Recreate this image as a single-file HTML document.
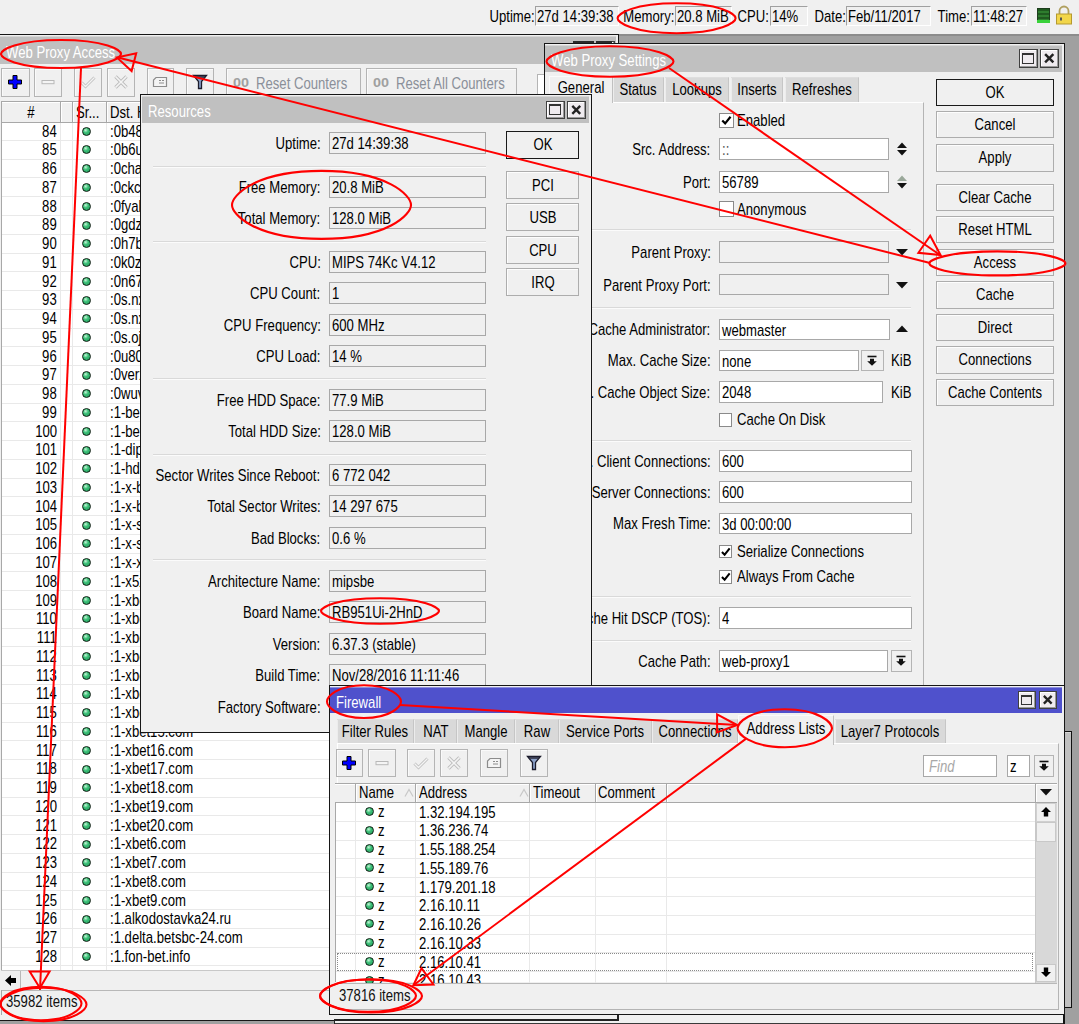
<!DOCTYPE html>
<html><head><meta charset="utf-8"><title>Winbox</title><style>*{margin:0;padding:0}
html,body{width:1079px;height:1024px;overflow:hidden;background:#a0a0a0;position:relative}
.b{position:absolute}
.t{position:absolute;white-space:pre;font-family:"Liberation Sans",sans-serif;font-size:15px;line-height:18px;color:#000}
</style></head><body>
<div class="b" style="left:0;top:0;width:1079px;height:34px;background:#f0f0f0;"></div>
<div class="b" style="left:0px;top:34px;width:1079px;height:2px;background:#8c8c8c;"></div>
<div class="t" style="right:544.5px;top:8px;font-size:15px;line-height:18px;color:#000;transform:scale(0.875,1.12);transform-origin:100% 14px;">Uptime:</div>
<div class="b" style="left:535px;top:6px;width:84px;height:20px;background:#f0f0f0;border-top:1px solid #a0a0a0;border-left:1px solid #a0a0a0;border-bottom:1px solid #fff;border-right:1px solid #fff;box-sizing:border-box;"></div>
<div class="t" style="left:537px;top:8px;font-size:15px;line-height:18px;color:#000;transform:scale(0.875,1.12);transform-origin:0 14px;">27d 14:39:38</div>
<div class="t" style="right:404.5px;top:8px;font-size:15px;line-height:18px;color:#000;transform:scale(0.875,1.12);transform-origin:100% 14px;">Memory:</div>
<div class="b" style="left:675px;top:6px;width:57px;height:20px;background:#f0f0f0;border-top:1px solid #a0a0a0;border-left:1px solid #a0a0a0;border-bottom:1px solid #fff;border-right:1px solid #fff;box-sizing:border-box;"></div>
<div class="t" style="left:677px;top:8px;font-size:15px;line-height:18px;color:#000;transform:scale(0.875,1.12);transform-origin:0 14px;">20.8 MiB</div>
<div class="t" style="right:310px;top:8px;font-size:15px;line-height:18px;color:#000;transform:scale(0.875,1.12);transform-origin:100% 14px;">CPU:</div>
<div class="b" style="left:770px;top:6px;width:38px;height:20px;background:#f0f0f0;border-top:1px solid #a0a0a0;border-left:1px solid #a0a0a0;border-bottom:1px solid #fff;border-right:1px solid #fff;box-sizing:border-box;"></div>
<div class="t" style="left:772px;top:8px;font-size:15px;line-height:18px;color:#000;transform:scale(0.875,1.12);transform-origin:0 14px;">14%</div>
<div class="t" style="right:233.5px;top:8px;font-size:15px;line-height:18px;color:#000;transform:scale(0.875,1.12);transform-origin:100% 14px;">Date:</div>
<div class="b" style="left:846px;top:6px;width:85px;height:20px;background:#f0f0f0;border-top:1px solid #a0a0a0;border-left:1px solid #a0a0a0;border-bottom:1px solid #fff;border-right:1px solid #fff;box-sizing:border-box;"></div>
<div class="t" style="left:848px;top:8px;font-size:15px;line-height:18px;color:#000;transform:scale(0.875,1.12);transform-origin:0 14px;">Feb/11/2017</div>
<div class="t" style="right:109px;top:8px;font-size:15px;line-height:18px;color:#000;transform:scale(0.875,1.12);transform-origin:100% 14px;">Time:</div>
<div class="b" style="left:971px;top:6px;width:56px;height:20px;background:#f0f0f0;border-top:1px solid #a0a0a0;border-left:1px solid #a0a0a0;border-bottom:1px solid #fff;border-right:1px solid #fff;box-sizing:border-box;"></div>
<div class="t" style="left:973px;top:8px;font-size:15px;line-height:18px;color:#000;transform:scale(0.875,1.12);transform-origin:0 14px;">11:48:27</div>
<div class="b" style="left:1037px;top:8px;width:13px;height:15px;background:repeating-linear-gradient(#1f5a1f 0 2px,#2e7d2e 2px 4px);border:1px solid #1d3d1d;box-sizing:border-box;"></div>
<div class="b" style="left:1037px;top:20px;width:13px;height:3px;background:#39d13a;"></div>
<svg class="b" style="left:1055px;top:5px" width="18" height="20" viewBox="0 0 18 20"><path d="M4.5 9 V6 a4.5 4.5 0 0 1 9 0 V9" fill="none" stroke="#b0a060" stroke-width="1.8"/><rect x="1.5" y="9" width="15" height="10" fill="#f2d64a" stroke="#b59a30" stroke-width="1"/><rect x="5" y="12.5" width="2" height="3" fill="#555"/></svg>
<div class="b" style="left:-4px;top:34px;width:622.5px;height:987px;background:#f0f0f0;border:1.6px solid #161616;box-sizing:border-box;"></div>
<div class="b" style="left:-2.4px;top:35.6px;width:618px;height:28.4px;background:#c0c0c0;box-shadow:inset 0 1px 0 rgba(255,255,255,0.35);"></div>
<div class="t" style="left:5.5px;top:44px;font-size:15px;line-height:18px;color:#fff;transform:scale(0.875,1.12);transform-origin:0 14px;">Web Proxy Access</div>
<div class="b" style="left:574px;top:41px;width:19px;height:19px;background:#efebef;border:1.5px solid #404040;box-sizing:border-box;box-shadow:inset -1px -1px 0 #9a9a9a, inset 1px 1px 0 #fff;"></div>
<div class="b" style="left:577.2px;top:44.5px;width:12.6px;height:12px;border:1.6px solid #333;border-top-width:2.6px;box-sizing:border-box;"></div>
<div class="b" style="left:596px;top:41px;width:19px;height:19px;background:#efebef;border:1.5px solid #404040;box-sizing:border-box;box-shadow:inset -1px -1px 0 #9a9a9a, inset 1px 1px 0 #fff;"></div>
<svg class="b" style="left:596px;top:41px" width="19" height="19" viewBox="0 0 18 18"><path d="M5 5 L13 13 M13 5 L5 13" stroke="#222" stroke-width="2.4"/></svg>
<div class="b" style="left:573px;top:40.6px;width:20.5px;height:3.4px;background:#2a2a2a;"></div>
<div class="b" style="left:595.5px;top:40.6px;width:16.5px;height:3.4px;background:#2a2a2a;"></div>
<div class="b" style="left:1px;top:68px;width:28.5px;height:28.5px;background:#f0f0f0;border:1px solid #b4b4b4;box-sizing:border-box;box-shadow:inset 1px 1px 0 #fafafa;"></div>
<svg class="b" style="left:6.25px;top:73.2px" width="18" height="18" viewBox="0 0 18 18"><path d="M7 2.5h4v4.5h4.5v4h-4.5v4.5h-4v-4.5h-4.5v-4h4.5z" fill="#0000ff" stroke="#000" stroke-width="1"/></svg>
<div class="b" style="left:34px;top:68px;width:27.5px;height:28.5px;background:#f0f0f0;border:1px solid #b4b4b4;box-sizing:border-box;box-shadow:inset 1px 1px 0 #fafafa;"></div>
<svg class="b" style="left:38.75px;top:73.2px" width="18" height="18" viewBox="0 0 18 18"><rect x="3" y="7.5" width="12" height="3.2" fill="#f4f4f4" stroke="#b8b8b8" stroke-width="1"/></svg>
<div class="b" style="left:74px;top:68px;width:27.5px;height:28.5px;background:#f0f0f0;border:1px solid #b4b4b4;box-sizing:border-box;box-shadow:inset 1px 1px 0 #fafafa;"></div>
<svg class="b" style="left:78.75px;top:73.2px" width="18" height="18" viewBox="0 0 18 18"><path d="M2.5 9.5 L6.5 13.5 L15.5 4.5" fill="none" stroke="#bdbdbd" stroke-width="3"/><path d="M2.5 9.5 L6.5 13.5 L15.5 4.5" fill="none" stroke="#f4f4f4" stroke-width="1.4"/></svg>
<div class="b" style="left:106.5px;top:68px;width:28px;height:28.5px;background:#f0f0f0;border:1px solid #b4b4b4;box-sizing:border-box;box-shadow:inset 1px 1px 0 #fafafa;"></div>
<svg class="b" style="left:111.5px;top:73.2px" width="18" height="18" viewBox="0 0 18 18"><path d="M3.5 3.5 L14.5 14.5 M14.5 3.5 L3.5 14.5" fill="none" stroke="#bdbdbd" stroke-width="3.4"/><path d="M3.5 3.5 L14.5 14.5 M14.5 3.5 L3.5 14.5" fill="none" stroke="#f4f4f4" stroke-width="1.6"/></svg>
<div class="b" style="left:146.7px;top:68px;width:27.1px;height:28.5px;background:#f0f0f0;border:1px solid #b4b4b4;box-sizing:border-box;box-shadow:inset 1px 1px 0 #fafafa;"></div>
<svg class="b" style="left:151.25px;top:73.2px" width="18" height="18" viewBox="0 0 18 18"><path d="M5 4.5 H15.5 V13.5 H2.5 V7 Z" fill="#f4f4f4" stroke="#8c8c8c" stroke-width="1.2"/><path d="M8 7.5h2M11 7.5h2M8 10h5" stroke="#8c8c8c" stroke-width="1"/></svg>
<div class="b" style="left:186.3px;top:68px;width:27.7px;height:28.5px;background:#f0f0f0;border:1px solid #b4b4b4;box-sizing:border-box;box-shadow:inset 1px 1px 0 #fafafa;"></div>
<svg class="b" style="left:191.15px;top:73.2px" width="18" height="18" viewBox="0 0 18 18"><path d="M2.5 2.5 H15.5 L10.5 8.5 V15.5 H7.5 V8.5 Z" fill="#8aa0c8" stroke="#1a1a2a" stroke-width="1.3"/><path d="M4 4 H14" stroke="#2a2a3a" stroke-width="1.5"/></svg>
<div class="b" style="left:226.3px;top:68px;width:134.3px;height:28.5px;background:#f0f0f0;border:1px solid #b4b4b4;box-sizing:border-box;box-shadow:inset 1px 1px 0 #fafafa;"></div>
<div class="t" style="left:233.3px;top:76.3px;font-size:12px;line-height:14.4px;color:#a0a0a0;transform:scale(1.2,1.12);transform-origin:0 11.2px;font-weight:bold;">00</div>
<div class="t" style="left:256.3px;top:75px;font-size:15px;line-height:18px;color:#8a8f99;transform:scale(0.875,1.12);transform-origin:0 14px;">Reset Counters</div>
<div class="b" style="left:365.8px;top:68px;width:150.9px;height:28.5px;background:#f0f0f0;border:1px solid #b4b4b4;box-sizing:border-box;box-shadow:inset 1px 1px 0 #fafafa;"></div>
<div class="t" style="left:372.8px;top:76.3px;font-size:12px;line-height:14.4px;color:#a0a0a0;transform:scale(1.2,1.12);transform-origin:0 11.2px;font-weight:bold;">00</div>
<div class="t" style="left:395.8px;top:75px;font-size:15px;line-height:18px;color:#8a8f99;transform:scale(0.875,1.12);transform-origin:0 14px;">Reset All Counters</div>
<div class="b" style="left:536.5px;top:74px;width:63.5px;height:22px;background:#fff;border:1px solid #b4b4b4;box-sizing:border-box;"></div>
<div class="b" style="left:1px;top:100.5px;width:617px;height:869.5px;background:#fff;"></div>
<div class="b" style="left:1px;top:100.5px;width:615.5px;height:22px;background:#f0f0f0;border-top:1px solid #a8a8a8;border-bottom:1px solid #a8a8a8;box-shadow:inset 0 1px 0 #fff;box-sizing:border-box;"></div>
<div class="b" style="left:1px;top:100.5px;width:1px;height:869.5px;background:#a8a8a8;"></div>
<div class="b" style="left:60.3px;top:100.5px;width:1px;height:21.5px;background:#a8a8a8;"></div>
<div class="b" style="left:61.3px;top:101.5px;width:1px;height:20.5px;background:#fff;"></div>
<div class="b" style="left:72px;top:100.5px;width:1px;height:21.5px;background:#a8a8a8;"></div>
<div class="b" style="left:73px;top:101.5px;width:1px;height:20.5px;background:#fff;"></div>
<div class="b" style="left:106.4px;top:100.5px;width:1px;height:21.5px;background:#a8a8a8;"></div>
<div class="b" style="left:107.4px;top:101.5px;width:1px;height:20.5px;background:#fff;"></div>
<div class="t" style="left:-269px;width:600px;text-align:center;top:104px;font-size:15px;line-height:18px;color:#000;transform:scale(0.875,1.12);transform-origin:50% 14px;">#</div>
<div class="t" style="left:76px;top:104px;font-size:15px;line-height:18px;color:#000;transform:scale(0.875,1.12);transform-origin:0 14px;">Sr...</div>
<div class="t" style="left:110.3px;top:104px;font-size:15px;line-height:18px;color:#000;transform:scale(0.875,1.12);transform-origin:0 14px;">Dst. Host</div>
<div class="b" style="left:2px;top:139.96px;width:614.5px;height:1px;background:#e9e9e9;"></div>
<div class="t" style="right:1022.3px;top:122.5px;font-size:15px;line-height:18px;color:#000;transform:scale(0.875,1.12);transform-origin:100% 14px;">84</div>
<div class="b" style="left:82.1px;top:126.7px;width:9px;height:9px;border-radius:50%;box-sizing:border-box;border:1.3px solid #0c1f12;background:radial-gradient(circle at 38% 32%,#c8f5d8 0,#3cc078 38%,#24985a 100%);"></div>
<div class="t" style="left:110px;top:122.5px;font-size:15px;line-height:18px;color:#000;transform:scale(0.875,1.12);transform-origin:0 14px;">:0b48x.com</div>
<div class="b" style="left:2px;top:158.72px;width:614.5px;height:1px;background:#e9e9e9;"></div>
<div class="t" style="right:1022.3px;top:141.26px;font-size:15px;line-height:18px;color:#000;transform:scale(0.875,1.12);transform-origin:100% 14px;">85</div>
<div class="b" style="left:82.1px;top:145.46px;width:9px;height:9px;border-radius:50%;box-sizing:border-box;border:1.3px solid #0c1f12;background:radial-gradient(circle at 38% 32%,#c8f5d8 0,#3cc078 38%,#24985a 100%);"></div>
<div class="t" style="left:110px;top:141.26px;font-size:15px;line-height:18px;color:#000;transform:scale(0.875,1.12);transform-origin:0 14px;">:0b6ux.com</div>
<div class="b" style="left:2px;top:177.48px;width:614.5px;height:1px;background:#e9e9e9;"></div>
<div class="t" style="right:1022.3px;top:160.02px;font-size:15px;line-height:18px;color:#000;transform:scale(0.875,1.12);transform-origin:100% 14px;">86</div>
<div class="b" style="left:82.1px;top:164.22px;width:9px;height:9px;border-radius:50%;box-sizing:border-box;border:1.3px solid #0c1f12;background:radial-gradient(circle at 38% 32%,#c8f5d8 0,#3cc078 38%,#24985a 100%);"></div>
<div class="t" style="left:110px;top:160.02px;font-size:15px;line-height:18px;color:#000;transform:scale(0.875,1.12);transform-origin:0 14px;">:0chax.com</div>
<div class="b" style="left:2px;top:196.24px;width:614.5px;height:1px;background:#e9e9e9;"></div>
<div class="t" style="right:1022.3px;top:178.78px;font-size:15px;line-height:18px;color:#000;transform:scale(0.875,1.12);transform-origin:100% 14px;">87</div>
<div class="b" style="left:82.1px;top:182.98px;width:9px;height:9px;border-radius:50%;box-sizing:border-box;border:1.3px solid #0c1f12;background:radial-gradient(circle at 38% 32%,#c8f5d8 0,#3cc078 38%,#24985a 100%);"></div>
<div class="t" style="left:110px;top:178.78px;font-size:15px;line-height:18px;color:#000;transform:scale(0.875,1.12);transform-origin:0 14px;">:0ckcx.com</div>
<div class="b" style="left:2px;top:215px;width:614.5px;height:1px;background:#e9e9e9;"></div>
<div class="t" style="right:1022.3px;top:197.54px;font-size:15px;line-height:18px;color:#000;transform:scale(0.875,1.12);transform-origin:100% 14px;">88</div>
<div class="b" style="left:82.1px;top:201.74px;width:9px;height:9px;border-radius:50%;box-sizing:border-box;border:1.3px solid #0c1f12;background:radial-gradient(circle at 38% 32%,#c8f5d8 0,#3cc078 38%,#24985a 100%);"></div>
<div class="t" style="left:110px;top:197.54px;font-size:15px;line-height:18px;color:#000;transform:scale(0.875,1.12);transform-origin:0 14px;">:0fyalx.com</div>
<div class="b" style="left:2px;top:233.76px;width:614.5px;height:1px;background:#e9e9e9;"></div>
<div class="t" style="right:1022.3px;top:216.3px;font-size:15px;line-height:18px;color:#000;transform:scale(0.875,1.12);transform-origin:100% 14px;">89</div>
<div class="b" style="left:82.1px;top:220.5px;width:9px;height:9px;border-radius:50%;box-sizing:border-box;border:1.3px solid #0c1f12;background:radial-gradient(circle at 38% 32%,#c8f5d8 0,#3cc078 38%,#24985a 100%);"></div>
<div class="t" style="left:110px;top:216.3px;font-size:15px;line-height:18px;color:#000;transform:scale(0.875,1.12);transform-origin:0 14px;">:0gdzx.com</div>
<div class="b" style="left:2px;top:252.52px;width:614.5px;height:1px;background:#e9e9e9;"></div>
<div class="t" style="right:1022.3px;top:235.06px;font-size:15px;line-height:18px;color:#000;transform:scale(0.875,1.12);transform-origin:100% 14px;">90</div>
<div class="b" style="left:82.1px;top:239.26px;width:9px;height:9px;border-radius:50%;box-sizing:border-box;border:1.3px solid #0c1f12;background:radial-gradient(circle at 38% 32%,#c8f5d8 0,#3cc078 38%,#24985a 100%);"></div>
<div class="t" style="left:110px;top:235.06px;font-size:15px;line-height:18px;color:#000;transform:scale(0.875,1.12);transform-origin:0 14px;">:0h7bx.com</div>
<div class="b" style="left:2px;top:271.28px;width:614.5px;height:1px;background:#e9e9e9;"></div>
<div class="t" style="right:1022.3px;top:253.82px;font-size:15px;line-height:18px;color:#000;transform:scale(0.875,1.12);transform-origin:100% 14px;">91</div>
<div class="b" style="left:82.1px;top:258.02px;width:9px;height:9px;border-radius:50%;box-sizing:border-box;border:1.3px solid #0c1f12;background:radial-gradient(circle at 38% 32%,#c8f5d8 0,#3cc078 38%,#24985a 100%);"></div>
<div class="t" style="left:110px;top:253.82px;font-size:15px;line-height:18px;color:#000;transform:scale(0.875,1.12);transform-origin:0 14px;">:0k0zx.com</div>
<div class="b" style="left:2px;top:290.04px;width:614.5px;height:1px;background:#e9e9e9;"></div>
<div class="t" style="right:1022.3px;top:272.58px;font-size:15px;line-height:18px;color:#000;transform:scale(0.875,1.12);transform-origin:100% 14px;">92</div>
<div class="b" style="left:82.1px;top:276.78px;width:9px;height:9px;border-radius:50%;box-sizing:border-box;border:1.3px solid #0c1f12;background:radial-gradient(circle at 38% 32%,#c8f5d8 0,#3cc078 38%,#24985a 100%);"></div>
<div class="t" style="left:110px;top:272.58px;font-size:15px;line-height:18px;color:#000;transform:scale(0.875,1.12);transform-origin:0 14px;">:0n67x.com</div>
<div class="b" style="left:2px;top:308.8px;width:614.5px;height:1px;background:#e9e9e9;"></div>
<div class="t" style="right:1022.3px;top:291.34px;font-size:15px;line-height:18px;color:#000;transform:scale(0.875,1.12);transform-origin:100% 14px;">93</div>
<div class="b" style="left:82.1px;top:295.54px;width:9px;height:9px;border-radius:50%;box-sizing:border-box;border:1.3px solid #0c1f12;background:radial-gradient(circle at 38% 32%,#c8f5d8 0,#3cc078 38%,#24985a 100%);"></div>
<div class="t" style="left:110px;top:291.34px;font-size:15px;line-height:18px;color:#000;transform:scale(0.875,1.12);transform-origin:0 14px;">:0s.nx.com</div>
<div class="b" style="left:2px;top:327.56px;width:614.5px;height:1px;background:#e9e9e9;"></div>
<div class="t" style="right:1022.3px;top:310.1px;font-size:15px;line-height:18px;color:#000;transform:scale(0.875,1.12);transform-origin:100% 14px;">94</div>
<div class="b" style="left:82.1px;top:314.3px;width:9px;height:9px;border-radius:50%;box-sizing:border-box;border:1.3px solid #0c1f12;background:radial-gradient(circle at 38% 32%,#c8f5d8 0,#3cc078 38%,#24985a 100%);"></div>
<div class="t" style="left:110px;top:310.1px;font-size:15px;line-height:18px;color:#000;transform:scale(0.875,1.12);transform-origin:0 14px;">:0s.nx.com</div>
<div class="b" style="left:2px;top:346.32px;width:614.5px;height:1px;background:#e9e9e9;"></div>
<div class="t" style="right:1022.3px;top:328.86px;font-size:15px;line-height:18px;color:#000;transform:scale(0.875,1.12);transform-origin:100% 14px;">95</div>
<div class="b" style="left:82.1px;top:333.06px;width:9px;height:9px;border-radius:50%;box-sizing:border-box;border:1.3px solid #0c1f12;background:radial-gradient(circle at 38% 32%,#c8f5d8 0,#3cc078 38%,#24985a 100%);"></div>
<div class="t" style="left:110px;top:328.86px;font-size:15px;line-height:18px;color:#000;transform:scale(0.875,1.12);transform-origin:0 14px;">:0s.ojx.com</div>
<div class="b" style="left:2px;top:365.08px;width:614.5px;height:1px;background:#e9e9e9;"></div>
<div class="t" style="right:1022.3px;top:347.62px;font-size:15px;line-height:18px;color:#000;transform:scale(0.875,1.12);transform-origin:100% 14px;">96</div>
<div class="b" style="left:82.1px;top:351.82px;width:9px;height:9px;border-radius:50%;box-sizing:border-box;border:1.3px solid #0c1f12;background:radial-gradient(circle at 38% 32%,#c8f5d8 0,#3cc078 38%,#24985a 100%);"></div>
<div class="t" style="left:110px;top:347.62px;font-size:15px;line-height:18px;color:#000;transform:scale(0.875,1.12);transform-origin:0 14px;">:0u80x.com</div>
<div class="b" style="left:2px;top:383.84px;width:614.5px;height:1px;background:#e9e9e9;"></div>
<div class="t" style="right:1022.3px;top:366.38px;font-size:15px;line-height:18px;color:#000;transform:scale(0.875,1.12);transform-origin:100% 14px;">97</div>
<div class="b" style="left:82.1px;top:370.58px;width:9px;height:9px;border-radius:50%;box-sizing:border-box;border:1.3px solid #0c1f12;background:radial-gradient(circle at 38% 32%,#c8f5d8 0,#3cc078 38%,#24985a 100%);"></div>
<div class="t" style="left:110px;top:366.38px;font-size:15px;line-height:18px;color:#000;transform:scale(0.875,1.12);transform-origin:0 14px;">:0verx.com</div>
<div class="b" style="left:2px;top:402.6px;width:614.5px;height:1px;background:#e9e9e9;"></div>
<div class="t" style="right:1022.3px;top:385.14px;font-size:15px;line-height:18px;color:#000;transform:scale(0.875,1.12);transform-origin:100% 14px;">98</div>
<div class="b" style="left:82.1px;top:389.34px;width:9px;height:9px;border-radius:50%;box-sizing:border-box;border:1.3px solid #0c1f12;background:radial-gradient(circle at 38% 32%,#c8f5d8 0,#3cc078 38%,#24985a 100%);"></div>
<div class="t" style="left:110px;top:385.14px;font-size:15px;line-height:18px;color:#000;transform:scale(0.875,1.12);transform-origin:0 14px;">:0wuvx.com</div>
<div class="b" style="left:2px;top:421.36px;width:614.5px;height:1px;background:#e9e9e9;"></div>
<div class="t" style="right:1022.3px;top:403.9px;font-size:15px;line-height:18px;color:#000;transform:scale(0.875,1.12);transform-origin:100% 14px;">99</div>
<div class="b" style="left:82.1px;top:408.1px;width:9px;height:9px;border-radius:50%;box-sizing:border-box;border:1.3px solid #0c1f12;background:radial-gradient(circle at 38% 32%,#c8f5d8 0,#3cc078 38%,#24985a 100%);"></div>
<div class="t" style="left:110px;top:403.9px;font-size:15px;line-height:18px;color:#000;transform:scale(0.875,1.12);transform-origin:0 14px;">:1-bet.com</div>
<div class="b" style="left:2px;top:440.12px;width:614.5px;height:1px;background:#e9e9e9;"></div>
<div class="t" style="right:1022.3px;top:422.66px;font-size:15px;line-height:18px;color:#000;transform:scale(0.875,1.12);transform-origin:100% 14px;">100</div>
<div class="b" style="left:82.1px;top:426.86px;width:9px;height:9px;border-radius:50%;box-sizing:border-box;border:1.3px solid #0c1f12;background:radial-gradient(circle at 38% 32%,#c8f5d8 0,#3cc078 38%,#24985a 100%);"></div>
<div class="t" style="left:110px;top:422.66px;font-size:15px;line-height:18px;color:#000;transform:scale(0.875,1.12);transform-origin:0 14px;">:1-bet.com</div>
<div class="b" style="left:2px;top:458.88px;width:614.5px;height:1px;background:#e9e9e9;"></div>
<div class="t" style="right:1022.3px;top:441.42px;font-size:15px;line-height:18px;color:#000;transform:scale(0.875,1.12);transform-origin:100% 14px;">101</div>
<div class="b" style="left:82.1px;top:445.62px;width:9px;height:9px;border-radius:50%;box-sizing:border-box;border:1.3px solid #0c1f12;background:radial-gradient(circle at 38% 32%,#c8f5d8 0,#3cc078 38%,#24985a 100%);"></div>
<div class="t" style="left:110px;top:441.42px;font-size:15px;line-height:18px;color:#000;transform:scale(0.875,1.12);transform-origin:0 14px;">:1-dipx.com</div>
<div class="b" style="left:2px;top:477.64px;width:614.5px;height:1px;background:#e9e9e9;"></div>
<div class="t" style="right:1022.3px;top:460.18px;font-size:15px;line-height:18px;color:#000;transform:scale(0.875,1.12);transform-origin:100% 14px;">102</div>
<div class="b" style="left:82.1px;top:464.38px;width:9px;height:9px;border-radius:50%;box-sizing:border-box;border:1.3px solid #0c1f12;background:radial-gradient(circle at 38% 32%,#c8f5d8 0,#3cc078 38%,#24985a 100%);"></div>
<div class="t" style="left:110px;top:460.18px;font-size:15px;line-height:18px;color:#000;transform:scale(0.875,1.12);transform-origin:0 14px;">:1-hdx.com</div>
<div class="b" style="left:2px;top:496.4px;width:614.5px;height:1px;background:#e9e9e9;"></div>
<div class="t" style="right:1022.3px;top:478.94px;font-size:15px;line-height:18px;color:#000;transform:scale(0.875,1.12);transform-origin:100% 14px;">103</div>
<div class="b" style="left:82.1px;top:483.14px;width:9px;height:9px;border-radius:50%;box-sizing:border-box;border:1.3px solid #0c1f12;background:radial-gradient(circle at 38% 32%,#c8f5d8 0,#3cc078 38%,#24985a 100%);"></div>
<div class="t" style="left:110px;top:478.94px;font-size:15px;line-height:18px;color:#000;transform:scale(0.875,1.12);transform-origin:0 14px;">:1-x-bet.com</div>
<div class="b" style="left:2px;top:515.16px;width:614.5px;height:1px;background:#e9e9e9;"></div>
<div class="t" style="right:1022.3px;top:497.7px;font-size:15px;line-height:18px;color:#000;transform:scale(0.875,1.12);transform-origin:100% 14px;">104</div>
<div class="b" style="left:82.1px;top:501.9px;width:9px;height:9px;border-radius:50%;box-sizing:border-box;border:1.3px solid #0c1f12;background:radial-gradient(circle at 38% 32%,#c8f5d8 0,#3cc078 38%,#24985a 100%);"></div>
<div class="t" style="left:110px;top:497.7px;font-size:15px;line-height:18px;color:#000;transform:scale(0.875,1.12);transform-origin:0 14px;">:1-x-bet.com</div>
<div class="b" style="left:2px;top:533.92px;width:614.5px;height:1px;background:#e9e9e9;"></div>
<div class="t" style="right:1022.3px;top:516.46px;font-size:15px;line-height:18px;color:#000;transform:scale(0.875,1.12);transform-origin:100% 14px;">105</div>
<div class="b" style="left:82.1px;top:520.66px;width:9px;height:9px;border-radius:50%;box-sizing:border-box;border:1.3px solid #0c1f12;background:radial-gradient(circle at 38% 32%,#c8f5d8 0,#3cc078 38%,#24985a 100%);"></div>
<div class="t" style="left:110px;top:516.46px;font-size:15px;line-height:18px;color:#000;transform:scale(0.875,1.12);transform-origin:0 14px;">:1-x-s.com</div>
<div class="b" style="left:2px;top:552.68px;width:614.5px;height:1px;background:#e9e9e9;"></div>
<div class="t" style="right:1022.3px;top:535.22px;font-size:15px;line-height:18px;color:#000;transform:scale(0.875,1.12);transform-origin:100% 14px;">106</div>
<div class="b" style="left:82.1px;top:539.42px;width:9px;height:9px;border-radius:50%;box-sizing:border-box;border:1.3px solid #0c1f12;background:radial-gradient(circle at 38% 32%,#c8f5d8 0,#3cc078 38%,#24985a 100%);"></div>
<div class="t" style="left:110px;top:535.22px;font-size:15px;line-height:18px;color:#000;transform:scale(0.875,1.12);transform-origin:0 14px;">:1-x-s.com</div>
<div class="b" style="left:2px;top:571.44px;width:614.5px;height:1px;background:#e9e9e9;"></div>
<div class="t" style="right:1022.3px;top:553.98px;font-size:15px;line-height:18px;color:#000;transform:scale(0.875,1.12);transform-origin:100% 14px;">107</div>
<div class="b" style="left:82.1px;top:558.18px;width:9px;height:9px;border-radius:50%;box-sizing:border-box;border:1.3px solid #0c1f12;background:radial-gradient(circle at 38% 32%,#c8f5d8 0,#3cc078 38%,#24985a 100%);"></div>
<div class="t" style="left:110px;top:553.98px;font-size:15px;line-height:18px;color:#000;transform:scale(0.875,1.12);transform-origin:0 14px;">:1-x-x.com</div>
<div class="b" style="left:2px;top:590.2px;width:614.5px;height:1px;background:#e9e9e9;"></div>
<div class="t" style="right:1022.3px;top:572.74px;font-size:15px;line-height:18px;color:#000;transform:scale(0.875,1.12);transform-origin:100% 14px;">108</div>
<div class="b" style="left:82.1px;top:576.94px;width:9px;height:9px;border-radius:50%;box-sizing:border-box;border:1.3px solid #0c1f12;background:radial-gradient(circle at 38% 32%,#c8f5d8 0,#3cc078 38%,#24985a 100%);"></div>
<div class="t" style="left:110px;top:572.74px;font-size:15px;line-height:18px;color:#000;transform:scale(0.875,1.12);transform-origin:0 14px;">:1-x5x.com</div>
<div class="b" style="left:2px;top:608.96px;width:614.5px;height:1px;background:#e9e9e9;"></div>
<div class="t" style="right:1022.3px;top:591.5px;font-size:15px;line-height:18px;color:#000;transform:scale(0.875,1.12);transform-origin:100% 14px;">109</div>
<div class="b" style="left:82.1px;top:595.7px;width:9px;height:9px;border-radius:50%;box-sizing:border-box;border:1.3px solid #0c1f12;background:radial-gradient(circle at 38% 32%,#c8f5d8 0,#3cc078 38%,#24985a 100%);"></div>
<div class="t" style="left:110px;top:591.5px;font-size:15px;line-height:18px;color:#000;transform:scale(0.875,1.12);transform-origin:0 14px;">:1-xbet.com</div>
<div class="b" style="left:2px;top:627.72px;width:614.5px;height:1px;background:#e9e9e9;"></div>
<div class="t" style="right:1022.3px;top:610.26px;font-size:15px;line-height:18px;color:#000;transform:scale(0.875,1.12);transform-origin:100% 14px;">110</div>
<div class="b" style="left:82.1px;top:614.46px;width:9px;height:9px;border-radius:50%;box-sizing:border-box;border:1.3px solid #0c1f12;background:radial-gradient(circle at 38% 32%,#c8f5d8 0,#3cc078 38%,#24985a 100%);"></div>
<div class="t" style="left:110px;top:610.26px;font-size:15px;line-height:18px;color:#000;transform:scale(0.875,1.12);transform-origin:0 14px;">:1-xbet1.com</div>
<div class="b" style="left:2px;top:646.48px;width:614.5px;height:1px;background:#e9e9e9;"></div>
<div class="t" style="right:1022.3px;top:629.02px;font-size:15px;line-height:18px;color:#000;transform:scale(0.875,1.12);transform-origin:100% 14px;">111</div>
<div class="b" style="left:82.1px;top:633.22px;width:9px;height:9px;border-radius:50%;box-sizing:border-box;border:1.3px solid #0c1f12;background:radial-gradient(circle at 38% 32%,#c8f5d8 0,#3cc078 38%,#24985a 100%);"></div>
<div class="t" style="left:110px;top:629.02px;font-size:15px;line-height:18px;color:#000;transform:scale(0.875,1.12);transform-origin:0 14px;">:1-xbet10.com</div>
<div class="b" style="left:2px;top:665.24px;width:614.5px;height:1px;background:#e9e9e9;"></div>
<div class="t" style="right:1022.3px;top:647.78px;font-size:15px;line-height:18px;color:#000;transform:scale(0.875,1.12);transform-origin:100% 14px;">112</div>
<div class="b" style="left:82.1px;top:651.98px;width:9px;height:9px;border-radius:50%;box-sizing:border-box;border:1.3px solid #0c1f12;background:radial-gradient(circle at 38% 32%,#c8f5d8 0,#3cc078 38%,#24985a 100%);"></div>
<div class="t" style="left:110px;top:647.78px;font-size:15px;line-height:18px;color:#000;transform:scale(0.875,1.12);transform-origin:0 14px;">:1-xbet11.com</div>
<div class="b" style="left:2px;top:684px;width:614.5px;height:1px;background:#e9e9e9;"></div>
<div class="t" style="right:1022.3px;top:666.54px;font-size:15px;line-height:18px;color:#000;transform:scale(0.875,1.12);transform-origin:100% 14px;">113</div>
<div class="b" style="left:82.1px;top:670.74px;width:9px;height:9px;border-radius:50%;box-sizing:border-box;border:1.3px solid #0c1f12;background:radial-gradient(circle at 38% 32%,#c8f5d8 0,#3cc078 38%,#24985a 100%);"></div>
<div class="t" style="left:110px;top:666.54px;font-size:15px;line-height:18px;color:#000;transform:scale(0.875,1.12);transform-origin:0 14px;">:1-xbet12.com</div>
<div class="b" style="left:2px;top:702.76px;width:614.5px;height:1px;background:#e9e9e9;"></div>
<div class="t" style="right:1022.3px;top:685.3px;font-size:15px;line-height:18px;color:#000;transform:scale(0.875,1.12);transform-origin:100% 14px;">114</div>
<div class="b" style="left:82.1px;top:689.5px;width:9px;height:9px;border-radius:50%;box-sizing:border-box;border:1.3px solid #0c1f12;background:radial-gradient(circle at 38% 32%,#c8f5d8 0,#3cc078 38%,#24985a 100%);"></div>
<div class="t" style="left:110px;top:685.3px;font-size:15px;line-height:18px;color:#000;transform:scale(0.875,1.12);transform-origin:0 14px;">:1-xbet13.com</div>
<div class="b" style="left:2px;top:721.52px;width:614.5px;height:1px;background:#e9e9e9;"></div>
<div class="t" style="right:1022.3px;top:704.06px;font-size:15px;line-height:18px;color:#000;transform:scale(0.875,1.12);transform-origin:100% 14px;">115</div>
<div class="b" style="left:82.1px;top:708.26px;width:9px;height:9px;border-radius:50%;box-sizing:border-box;border:1.3px solid #0c1f12;background:radial-gradient(circle at 38% 32%,#c8f5d8 0,#3cc078 38%,#24985a 100%);"></div>
<div class="t" style="left:110px;top:704.06px;font-size:15px;line-height:18px;color:#000;transform:scale(0.875,1.12);transform-origin:0 14px;">:1-xbet14.com</div>
<div class="b" style="left:2px;top:740.28px;width:614.5px;height:1px;background:#e9e9e9;"></div>
<div class="t" style="right:1022.3px;top:722.82px;font-size:15px;line-height:18px;color:#000;transform:scale(0.875,1.12);transform-origin:100% 14px;">116</div>
<div class="b" style="left:82.1px;top:727.02px;width:9px;height:9px;border-radius:50%;box-sizing:border-box;border:1.3px solid #0c1f12;background:radial-gradient(circle at 38% 32%,#c8f5d8 0,#3cc078 38%,#24985a 100%);"></div>
<div class="t" style="left:110px;top:722.82px;font-size:15px;line-height:18px;color:#000;transform:scale(0.875,1.12);transform-origin:0 14px;">:1-xbet15.com</div>
<div class="b" style="left:2px;top:759.04px;width:614.5px;height:1px;background:#e9e9e9;"></div>
<div class="t" style="right:1022.3px;top:741.58px;font-size:15px;line-height:18px;color:#000;transform:scale(0.875,1.12);transform-origin:100% 14px;">117</div>
<div class="b" style="left:82.1px;top:745.78px;width:9px;height:9px;border-radius:50%;box-sizing:border-box;border:1.3px solid #0c1f12;background:radial-gradient(circle at 38% 32%,#c8f5d8 0,#3cc078 38%,#24985a 100%);"></div>
<div class="t" style="left:110px;top:741.58px;font-size:15px;line-height:18px;color:#000;transform:scale(0.875,1.12);transform-origin:0 14px;">:1-xbet16.com</div>
<div class="b" style="left:2px;top:777.8px;width:614.5px;height:1px;background:#e9e9e9;"></div>
<div class="t" style="right:1022.3px;top:760.34px;font-size:15px;line-height:18px;color:#000;transform:scale(0.875,1.12);transform-origin:100% 14px;">118</div>
<div class="b" style="left:82.1px;top:764.54px;width:9px;height:9px;border-radius:50%;box-sizing:border-box;border:1.3px solid #0c1f12;background:radial-gradient(circle at 38% 32%,#c8f5d8 0,#3cc078 38%,#24985a 100%);"></div>
<div class="t" style="left:110px;top:760.34px;font-size:15px;line-height:18px;color:#000;transform:scale(0.875,1.12);transform-origin:0 14px;">:1-xbet17.com</div>
<div class="b" style="left:2px;top:796.56px;width:614.5px;height:1px;background:#e9e9e9;"></div>
<div class="t" style="right:1022.3px;top:779.1px;font-size:15px;line-height:18px;color:#000;transform:scale(0.875,1.12);transform-origin:100% 14px;">119</div>
<div class="b" style="left:82.1px;top:783.3px;width:9px;height:9px;border-radius:50%;box-sizing:border-box;border:1.3px solid #0c1f12;background:radial-gradient(circle at 38% 32%,#c8f5d8 0,#3cc078 38%,#24985a 100%);"></div>
<div class="t" style="left:110px;top:779.1px;font-size:15px;line-height:18px;color:#000;transform:scale(0.875,1.12);transform-origin:0 14px;">:1-xbet18.com</div>
<div class="b" style="left:2px;top:815.32px;width:614.5px;height:1px;background:#e9e9e9;"></div>
<div class="t" style="right:1022.3px;top:797.86px;font-size:15px;line-height:18px;color:#000;transform:scale(0.875,1.12);transform-origin:100% 14px;">120</div>
<div class="b" style="left:82.1px;top:802.06px;width:9px;height:9px;border-radius:50%;box-sizing:border-box;border:1.3px solid #0c1f12;background:radial-gradient(circle at 38% 32%,#c8f5d8 0,#3cc078 38%,#24985a 100%);"></div>
<div class="t" style="left:110px;top:797.86px;font-size:15px;line-height:18px;color:#000;transform:scale(0.875,1.12);transform-origin:0 14px;">:1-xbet19.com</div>
<div class="b" style="left:2px;top:834.08px;width:614.5px;height:1px;background:#e9e9e9;"></div>
<div class="t" style="right:1022.3px;top:816.62px;font-size:15px;line-height:18px;color:#000;transform:scale(0.875,1.12);transform-origin:100% 14px;">121</div>
<div class="b" style="left:82.1px;top:820.82px;width:9px;height:9px;border-radius:50%;box-sizing:border-box;border:1.3px solid #0c1f12;background:radial-gradient(circle at 38% 32%,#c8f5d8 0,#3cc078 38%,#24985a 100%);"></div>
<div class="t" style="left:110px;top:816.62px;font-size:15px;line-height:18px;color:#000;transform:scale(0.875,1.12);transform-origin:0 14px;">:1-xbet20.com</div>
<div class="b" style="left:2px;top:852.84px;width:614.5px;height:1px;background:#e9e9e9;"></div>
<div class="t" style="right:1022.3px;top:835.38px;font-size:15px;line-height:18px;color:#000;transform:scale(0.875,1.12);transform-origin:100% 14px;">122</div>
<div class="b" style="left:82.1px;top:839.58px;width:9px;height:9px;border-radius:50%;box-sizing:border-box;border:1.3px solid #0c1f12;background:radial-gradient(circle at 38% 32%,#c8f5d8 0,#3cc078 38%,#24985a 100%);"></div>
<div class="t" style="left:110px;top:835.38px;font-size:15px;line-height:18px;color:#000;transform:scale(0.875,1.12);transform-origin:0 14px;">:1-xbet6.com</div>
<div class="b" style="left:2px;top:871.6px;width:614.5px;height:1px;background:#e9e9e9;"></div>
<div class="t" style="right:1022.3px;top:854.14px;font-size:15px;line-height:18px;color:#000;transform:scale(0.875,1.12);transform-origin:100% 14px;">123</div>
<div class="b" style="left:82.1px;top:858.34px;width:9px;height:9px;border-radius:50%;box-sizing:border-box;border:1.3px solid #0c1f12;background:radial-gradient(circle at 38% 32%,#c8f5d8 0,#3cc078 38%,#24985a 100%);"></div>
<div class="t" style="left:110px;top:854.14px;font-size:15px;line-height:18px;color:#000;transform:scale(0.875,1.12);transform-origin:0 14px;">:1-xbet7.com</div>
<div class="b" style="left:2px;top:890.36px;width:614.5px;height:1px;background:#e9e9e9;"></div>
<div class="t" style="right:1022.3px;top:872.9px;font-size:15px;line-height:18px;color:#000;transform:scale(0.875,1.12);transform-origin:100% 14px;">124</div>
<div class="b" style="left:82.1px;top:877.1px;width:9px;height:9px;border-radius:50%;box-sizing:border-box;border:1.3px solid #0c1f12;background:radial-gradient(circle at 38% 32%,#c8f5d8 0,#3cc078 38%,#24985a 100%);"></div>
<div class="t" style="left:110px;top:872.9px;font-size:15px;line-height:18px;color:#000;transform:scale(0.875,1.12);transform-origin:0 14px;">:1-xbet8.com</div>
<div class="b" style="left:2px;top:909.12px;width:614.5px;height:1px;background:#e9e9e9;"></div>
<div class="t" style="right:1022.3px;top:891.66px;font-size:15px;line-height:18px;color:#000;transform:scale(0.875,1.12);transform-origin:100% 14px;">125</div>
<div class="b" style="left:82.1px;top:895.86px;width:9px;height:9px;border-radius:50%;box-sizing:border-box;border:1.3px solid #0c1f12;background:radial-gradient(circle at 38% 32%,#c8f5d8 0,#3cc078 38%,#24985a 100%);"></div>
<div class="t" style="left:110px;top:891.66px;font-size:15px;line-height:18px;color:#000;transform:scale(0.875,1.12);transform-origin:0 14px;">:1-xbet9.com</div>
<div class="b" style="left:2px;top:927.88px;width:614.5px;height:1px;background:#e9e9e9;"></div>
<div class="t" style="right:1022.3px;top:910.42px;font-size:15px;line-height:18px;color:#000;transform:scale(0.875,1.12);transform-origin:100% 14px;">126</div>
<div class="b" style="left:82.1px;top:914.62px;width:9px;height:9px;border-radius:50%;box-sizing:border-box;border:1.3px solid #0c1f12;background:radial-gradient(circle at 38% 32%,#c8f5d8 0,#3cc078 38%,#24985a 100%);"></div>
<div class="t" style="left:110px;top:910.42px;font-size:15px;line-height:18px;color:#000;transform:scale(0.875,1.12);transform-origin:0 14px;">:1.alkodostavka24.ru</div>
<div class="b" style="left:2px;top:946.64px;width:614.5px;height:1px;background:#e9e9e9;"></div>
<div class="t" style="right:1022.3px;top:929.18px;font-size:15px;line-height:18px;color:#000;transform:scale(0.875,1.12);transform-origin:100% 14px;">127</div>
<div class="b" style="left:82.1px;top:933.38px;width:9px;height:9px;border-radius:50%;box-sizing:border-box;border:1.3px solid #0c1f12;background:radial-gradient(circle at 38% 32%,#c8f5d8 0,#3cc078 38%,#24985a 100%);"></div>
<div class="t" style="left:110px;top:929.18px;font-size:15px;line-height:18px;color:#000;transform:scale(0.875,1.12);transform-origin:0 14px;">:1.delta.betsbc-24.com</div>
<div class="b" style="left:2px;top:965.4px;width:614.5px;height:1px;background:#e9e9e9;"></div>
<div class="t" style="right:1022.3px;top:947.94px;font-size:15px;line-height:18px;color:#000;transform:scale(0.875,1.12);transform-origin:100% 14px;">128</div>
<div class="b" style="left:82.1px;top:952.14px;width:9px;height:9px;border-radius:50%;box-sizing:border-box;border:1.3px solid #0c1f12;background:radial-gradient(circle at 38% 32%,#c8f5d8 0,#3cc078 38%,#24985a 100%);"></div>
<div class="t" style="left:110px;top:947.94px;font-size:15px;line-height:18px;color:#000;transform:scale(0.875,1.12);transform-origin:0 14px;">:1.fon-bet.info</div>
<div class="b" style="left:2px;top:984.16px;width:614.5px;height:1px;background:#e9e9e9;"></div>
<div class="b" style="left:60.3px;top:122.5px;width:1px;height:847.5px;background:#e9e9e9;"></div>
<div class="b" style="left:72px;top:122.5px;width:1px;height:847.5px;background:#e9e9e9;"></div>
<div class="b" style="left:106.4px;top:122.5px;width:1px;height:847.5px;background:#e9e9e9;"></div>
<div class="b" style="left:1px;top:970px;width:615.5px;height:20px;background:#f0f0f0;border-top:1px solid #c8c8c8;box-sizing:border-box;"></div>
<div class="b" style="left:2px;top:971px;width:19.3px;height:19px;background:#f0f0f0;border-right:1px solid #b8b8b8;box-sizing:border-box;"></div>
<svg class="b" style="left:4px;top:974px" width="14" height="13" viewBox="0 0 14 13"><path d="M1 6.5 L7 1 V4 H12 V9 H7 V12 Z" fill="#000"/></svg>
<div class="b" style="left:1px;top:990px;width:615.5px;height:29px;background:#f0f0f0;border-top:1px solid #b8b8b8;box-sizing:border-box;"></div>
<div class="b" style="left:1px;top:990px;width:1px;height:24.5px;background:#a8a8a8;"></div>
<div class="t" style="left:5.6px;top:993px;font-size:15px;line-height:18px;color:#111;transform:scale(0.875,1.12);transform-origin:0 14px;">35982 items</div>
<div class="b" style="left:1060px;top:731px;width:11.5px;height:276.5px;background:#c0c0c0;border:1.5px solid #111;box-sizing:border-box;box-shadow:inset 1px 1px 0 #d8d8d8;"></div>
<div class="b" style="left:543.7px;top:43px;width:521.3px;height:981px;background:#f0f0f0;border:1.6px solid #161616;box-sizing:border-box;"></div>
<div class="b" style="left:545.3px;top:44.6px;width:516.8px;height:27.2px;background:#c0c0c0;box-shadow:inset 0 1px 0 rgba(255,255,255,0.35);"></div>
<div class="t" style="left:551px;top:52px;font-size:15px;line-height:18px;color:#fff;transform:scale(0.875,1.12);transform-origin:0 14px;">Web Proxy Settings</div>
<div class="b" style="left:1019px;top:49px;width:18.5px;height:18.5px;background:#efebef;border:1.5px solid #404040;box-sizing:border-box;box-shadow:inset -1px -1px 0 #9a9a9a, inset 1px 1px 0 #fff;"></div>
<div class="b" style="left:1022.2px;top:52.5px;width:12.1px;height:11.5px;border:1.6px solid #333;border-top-width:2.6px;box-sizing:border-box;"></div>
<div class="b" style="left:1040px;top:49px;width:18.5px;height:18.5px;background:#efebef;border:1.5px solid #404040;box-sizing:border-box;box-shadow:inset -1px -1px 0 #9a9a9a, inset 1px 1px 0 #fff;"></div>
<svg class="b" style="left:1040px;top:49px" width="18.5" height="18.5" viewBox="0 0 18 18"><path d="M5 5 L13 13 M13 5 L5 13" stroke="#222" stroke-width="2.4"/></svg>
<div class="b" style="left:548.7px;top:101.5px;width:375.3px;height:903.5px;background:#f0f0f0;border-top:1px solid #fff;border-left:1px solid #fff;border-right:1.5px solid #b4b4b4;box-sizing:border-box;"></div>
<div class="b" style="left:612.7px;top:77px;width:50.9px;height:24.5px;background:#d9d9d9;border-top:1px solid #dedede;border-right:1px solid #c6c6c6;box-shadow:inset 1px 0 0 #ececec;box-sizing:border-box;"></div>
<div class="t" style="left:338.15px;width:600px;text-align:center;top:81px;font-size:15px;line-height:18px;color:#000;transform:scale(0.875,1.12);transform-origin:50% 14px;">Status</div>
<div class="b" style="left:664.6px;top:77px;width:64.8px;height:24.5px;background:#d9d9d9;border-top:1px solid #dedede;border-right:1px solid #c6c6c6;box-shadow:inset 1px 0 0 #ececec;box-sizing:border-box;"></div>
<div class="t" style="left:397px;width:600px;text-align:center;top:81px;font-size:15px;line-height:18px;color:#000;transform:scale(0.875,1.12);transform-origin:50% 14px;">Lookups</div>
<div class="b" style="left:730.8px;top:77px;width:52.1px;height:24.5px;background:#d9d9d9;border-top:1px solid #dedede;border-right:1px solid #c6c6c6;box-shadow:inset 1px 0 0 #ececec;box-sizing:border-box;"></div>
<div class="t" style="left:456.85px;width:600px;text-align:center;top:81px;font-size:15px;line-height:18px;color:#000;transform:scale(0.875,1.12);transform-origin:50% 14px;">Inserts</div>
<div class="b" style="left:785px;top:77px;width:73.5px;height:24.5px;background:#d9d9d9;border-top:1px solid #dedede;border-right:1px solid #c6c6c6;box-shadow:inset 1px 0 0 #ececec;box-sizing:border-box;"></div>
<div class="t" style="left:521.75px;width:600px;text-align:center;top:81px;font-size:15px;line-height:18px;color:#000;transform:scale(0.875,1.12);transform-origin:50% 14px;">Refreshes</div>
<div class="b" style="left:548.7px;top:75.6px;width:64px;height:27.4px;background:#f0f0f0;border-top:1px solid #fafafa;border-left:1px solid #fafafa;border-right:1px solid #c0c0c0;box-sizing:border-box;"></div>
<div class="t" style="left:280.7px;width:600px;text-align:center;top:78.5px;font-size:15px;line-height:18px;color:#000;transform:scale(0.875,1.12);transform-origin:50% 14px;">General</div>
<div class="b" style="left:718.9px;top:113px;width:14.8px;height:14.5px;background:#fff;border:1px solid #8a8a8a;box-sizing:border-box;"></div>
<svg class="b" style="left:718.9px;top:113px" width="14.8" height="14.5" viewBox="0 0 14 14"><path d="M3 7.2 L5.8 10 L11 3.6" fill="none" stroke="#000" stroke-width="2.1"/></svg>
<div class="t" style="left:737px;top:111.8px;font-size:15px;line-height:18px;color:#000;transform:scale(0.875,1.12);transform-origin:0 14px;">Enabled</div>
<div class="t" style="right:368.5px;top:140.9px;font-size:15px;line-height:18px;color:#000;transform:scale(0.875,1.12);transform-origin:100% 14px;">Src. Address:</div>
<div class="b" style="left:718.5px;top:138.4px;width:170.8px;height:21.6px;background:#fff;border:1px solid #a8a8a8;box-sizing:border-box;"></div>
<div class="t" style="left:721.5px;top:141.4px;font-size:15px;line-height:18px;color:#555;transform:scale(0.875,1.12);transform-origin:0 14px;">::</div>
<svg class="b" style="left:896px;top:141.2px" width="12" height="16" viewBox="0 0 12 16"><path d="M1 7 L6 1.5 L11 7 Z" fill="#111"/><path d="M1 9 L6 14.5 L11 9 Z" fill="#111"/></svg>
<div class="t" style="right:368.5px;top:173.7px;font-size:15px;line-height:18px;color:#000;transform:scale(0.875,1.12);transform-origin:100% 14px;">Port:</div>
<div class="b" style="left:718.5px;top:171.2px;width:170.8px;height:21.4px;background:#fff;border:1px solid #a8a8a8;box-sizing:border-box;"></div>
<div class="t" style="left:721.5px;top:174.2px;font-size:15px;line-height:18px;color:#000;transform:scale(0.875,1.12);transform-origin:0 14px;">56789</div>
<svg class="b" style="left:896px;top:174px" width="12" height="16" viewBox="0 0 12 16"><path d="M1 7 L6 1.5 L11 7 Z" fill="#9aa89a"/><path d="M1 9 L6 14.5 L11 9 Z" fill="#111"/></svg>
<div class="b" style="left:718.9px;top:201.4px;width:14.8px;height:15.2px;background:#fff;border:1px solid #8a8a8a;box-sizing:border-box;"></div>
<div class="t" style="left:737px;top:200.8px;font-size:15px;line-height:18px;color:#000;transform:scale(0.875,1.12);transform-origin:0 14px;">Anonymous</div>
<div class="b" style="left:549.5px;top:228.7px;width:361.5px;height:1px;background:#d9d9d9;"></div>
<div class="b" style="left:549.5px;top:229.7px;width:361.5px;height:1px;background:#fbfbfb;"></div>
<div class="t" style="right:368.5px;top:243.5px;font-size:15px;line-height:18px;color:#000;transform:scale(0.875,1.12);transform-origin:100% 14px;">Parent Proxy:</div>
<div class="b" style="left:718.5px;top:241px;width:170.8px;height:21.6px;background:#f0f0f0;border:1px solid #a8a8a8;box-sizing:border-box;"></div>
<svg class="b" style="left:895px;top:247.5px" width="14" height="8" viewBox="0 0 14 8"><path d="M1 1 L13 1 L7 7.5 Z" fill="#111"/></svg>
<div class="t" style="right:368.5px;top:276.5px;font-size:15px;line-height:18px;color:#000;transform:scale(0.875,1.12);transform-origin:100% 14px;">Parent Proxy Port:</div>
<div class="b" style="left:718.5px;top:274px;width:170.8px;height:21.3px;background:#f0f0f0;border:1px solid #a8a8a8;box-sizing:border-box;"></div>
<svg class="b" style="left:895px;top:280.5px" width="14" height="8" viewBox="0 0 14 8"><path d="M1 1 L13 1 L7 7.5 Z" fill="#111"/></svg>
<div class="b" style="left:549.5px;top:307px;width:361.5px;height:1px;background:#d9d9d9;"></div>
<div class="b" style="left:549.5px;top:308px;width:361.5px;height:1px;background:#fbfbfb;"></div>
<div class="t" style="right:368.5px;top:321px;font-size:15px;line-height:18px;color:#000;transform:scale(0.875,1.12);transform-origin:100% 14px;">Cache Administrator:</div>
<div class="b" style="left:718.7px;top:318.5px;width:171.1px;height:21.5px;background:#fff;border:1px solid #a8a8a8;box-sizing:border-box;"></div>
<div class="t" style="left:721.7px;top:321.5px;font-size:15px;line-height:18px;color:#000;transform:scale(0.875,1.12);transform-origin:0 14px;">webmaster</div>
<svg class="b" style="left:895px;top:325px" width="14" height="8" viewBox="0 0 14 8"><path d="M1 7 L13 7 L7 0.5 Z" fill="#111"/></svg>
<div class="t" style="right:368.5px;top:352.3px;font-size:15px;line-height:18px;color:#000;transform:scale(0.875,1.12);transform-origin:100% 14px;">Max. Cache Size:</div>
<div class="b" style="left:718.7px;top:349.8px;width:140.6px;height:21.5px;background:#fff;border:1px solid #a8a8a8;box-sizing:border-box;"></div>
<div class="t" style="left:721.7px;top:352.8px;font-size:15px;line-height:18px;color:#000;transform:scale(0.875,1.12);transform-origin:0 14px;">none</div>
<div class="b" style="left:861px;top:349.8px;width:22.5px;height:21.5px;background:#f0f0f0;border:1px solid #b4b4b4;box-sizing:border-box;"></div>
<svg class="b" style="left:866.25px;top:354.55px" width="12" height="12" viewBox="0 0 12 12"><path d="M1.5 1.5 H10.5" stroke="#111" stroke-width="1.6"/><path d="M4 3.8 H8 V6.2 H10.8 L6 10.8 L1.2 6.2 H4 Z" fill="#111"/></svg>
<div class="t" style="left:890.5px;top:352.3px;font-size:15px;line-height:18px;color:#000;transform:scale(0.875,1.12);transform-origin:0 14px;">KiB</div>
<div class="t" style="right:368.5px;top:383.5px;font-size:15px;line-height:18px;color:#000;transform:scale(0.875,1.12);transform-origin:100% 14px;">Max. Cache Object Size:</div>
<div class="b" style="left:718.7px;top:381px;width:164.8px;height:21.5px;background:#fff;border:1px solid #a8a8a8;box-sizing:border-box;"></div>
<div class="t" style="left:721.7px;top:384px;font-size:15px;line-height:18px;color:#000;transform:scale(0.875,1.12);transform-origin:0 14px;">2048</div>
<div class="t" style="left:890.5px;top:383.5px;font-size:15px;line-height:18px;color:#000;transform:scale(0.875,1.12);transform-origin:0 14px;">KiB</div>
<div class="b" style="left:718.7px;top:413px;width:13.6px;height:13.7px;background:#fff;border:1px solid #8a8a8a;box-sizing:border-box;"></div>
<div class="t" style="left:737px;top:411.2px;font-size:15px;line-height:18px;color:#000;transform:scale(0.875,1.12);transform-origin:0 14px;">Cache On Disk</div>
<div class="b" style="left:549.5px;top:440px;width:361.5px;height:1px;background:#d9d9d9;"></div>
<div class="b" style="left:549.5px;top:441px;width:361.5px;height:1px;background:#fbfbfb;"></div>
<div class="t" style="right:368.5px;top:452.5px;font-size:15px;line-height:18px;color:#000;transform:scale(0.875,1.12);transform-origin:100% 14px;">Max. Client Connections:</div>
<div class="b" style="left:718.7px;top:450px;width:193.3px;height:21.6px;background:#fff;border:1px solid #a8a8a8;box-sizing:border-box;"></div>
<div class="t" style="left:721.7px;top:453px;font-size:15px;line-height:18px;color:#000;transform:scale(0.875,1.12);transform-origin:0 14px;">600</div>
<div class="t" style="right:368.5px;top:483.9px;font-size:15px;line-height:18px;color:#000;transform:scale(0.875,1.12);transform-origin:100% 14px;">Max. Server Connections:</div>
<div class="b" style="left:718.7px;top:481.4px;width:193.3px;height:21.6px;background:#fff;border:1px solid #a8a8a8;box-sizing:border-box;"></div>
<div class="t" style="left:721.7px;top:484.4px;font-size:15px;line-height:18px;color:#000;transform:scale(0.875,1.12);transform-origin:0 14px;">600</div>
<div class="t" style="right:368.5px;top:515.1px;font-size:15px;line-height:18px;color:#000;transform:scale(0.875,1.12);transform-origin:100% 14px;">Max Fresh Time:</div>
<div class="b" style="left:718.7px;top:512.6px;width:193.3px;height:21.4px;background:#fff;border:1px solid #a8a8a8;box-sizing:border-box;"></div>
<div class="t" style="left:721.7px;top:515.6px;font-size:15px;line-height:18px;color:#000;transform:scale(0.875,1.12);transform-origin:0 14px;">3d 00:00:00</div>
<div class="b" style="left:718.7px;top:544.7px;width:13.6px;height:13.5px;background:#fff;border:1px solid #8a8a8a;box-sizing:border-box;"></div>
<svg class="b" style="left:718.7px;top:544.7px" width="13.6" height="13.5" viewBox="0 0 14 14"><path d="M3 7.2 L5.8 10 L11 3.6" fill="none" stroke="#000" stroke-width="2.1"/></svg>
<div class="t" style="left:737px;top:543.2px;font-size:15px;line-height:18px;color:#000;transform:scale(0.875,1.12);transform-origin:0 14px;">Serialize Connections</div>
<div class="b" style="left:718.7px;top:570px;width:13.6px;height:13.5px;background:#fff;border:1px solid #8a8a8a;box-sizing:border-box;"></div>
<svg class="b" style="left:718.7px;top:570px" width="13.6" height="13.5" viewBox="0 0 14 14"><path d="M3 7.2 L5.8 10 L11 3.6" fill="none" stroke="#000" stroke-width="2.1"/></svg>
<div class="t" style="left:737px;top:568.2px;font-size:15px;line-height:18px;color:#000;transform:scale(0.875,1.12);transform-origin:0 14px;">Always From Cache</div>
<div class="b" style="left:549.5px;top:596px;width:361.5px;height:1px;background:#d9d9d9;"></div>
<div class="b" style="left:549.5px;top:597px;width:361.5px;height:1px;background:#fbfbfb;"></div>
<div class="t" style="right:368.5px;top:609.5px;font-size:15px;line-height:18px;color:#000;transform:scale(0.875,1.12);transform-origin:100% 14px;">Cache Hit DSCP (TOS):</div>
<div class="b" style="left:718.7px;top:607px;width:193.3px;height:21.5px;background:#fff;border:1px solid #a8a8a8;box-sizing:border-box;"></div>
<div class="t" style="left:721.7px;top:610px;font-size:15px;line-height:18px;color:#000;transform:scale(0.875,1.12);transform-origin:0 14px;">4</div>
<div class="b" style="left:549.5px;top:640px;width:361.5px;height:1px;background:#d9d9d9;"></div>
<div class="b" style="left:549.5px;top:641px;width:361.5px;height:1px;background:#fbfbfb;"></div>
<div class="t" style="right:368.5px;top:652.5px;font-size:15px;line-height:18px;color:#000;transform:scale(0.875,1.12);transform-origin:100% 14px;">Cache Path:</div>
<div class="b" style="left:718.7px;top:650px;width:169.1px;height:21.6px;background:#fff;border:1px solid #a8a8a8;box-sizing:border-box;"></div>
<div class="t" style="left:721.7px;top:653px;font-size:15px;line-height:18px;color:#000;transform:scale(0.875,1.12);transform-origin:0 14px;">web-proxy1</div>
<div class="b" style="left:890.5px;top:650px;width:21.5px;height:21.6px;background:#f0f0f0;border:1px solid #b4b4b4;box-sizing:border-box;"></div>
<svg class="b" style="left:895.25px;top:654.8px" width="12" height="12" viewBox="0 0 12 12"><path d="M1.5 1.5 H10.5" stroke="#111" stroke-width="1.6"/><path d="M4 3.8 H8 V6.2 H10.8 L6 10.8 L1.2 6.2 H4 Z" fill="#111"/></svg>
<div class="b" style="left:936px;top:78.5px;width:118.4px;height:27.5px;background:#f0f0f0;border:1.5px solid #1a1a1a;box-sizing:border-box;"></div>
<div class="t" style="left:695.2px;width:600px;text-align:center;top:83.75px;font-size:15px;line-height:18px;color:#000;transform:scale(0.875,1.12);transform-origin:50% 14px;">OK</div>
<div class="b" style="left:936px;top:111px;width:118.4px;height:27.4px;background:#f0f0f0;border:1px solid #adadad;box-sizing:border-box;box-shadow:inset 1px 1px 0 #fdfdfd;"></div>
<div class="t" style="left:695.2px;width:600px;text-align:center;top:116.2px;font-size:15px;line-height:18px;color:#000;transform:scale(0.875,1.12);transform-origin:50% 14px;">Cancel</div>
<div class="b" style="left:936px;top:143.5px;width:118.4px;height:28px;background:#f0f0f0;border:1px solid #adadad;box-sizing:border-box;box-shadow:inset 1px 1px 0 #fdfdfd;"></div>
<div class="t" style="left:695.2px;width:600px;text-align:center;top:149px;font-size:15px;line-height:18px;color:#000;transform:scale(0.875,1.12);transform-origin:50% 14px;">Apply</div>
<div class="b" style="left:936px;top:183.5px;width:118.4px;height:27.5px;background:#f0f0f0;border:1px solid #adadad;box-sizing:border-box;box-shadow:inset 1px 1px 0 #fdfdfd;"></div>
<div class="t" style="left:695.2px;width:600px;text-align:center;top:188.75px;font-size:15px;line-height:18px;color:#000;transform:scale(0.875,1.12);transform-origin:50% 14px;">Clear Cache</div>
<div class="b" style="left:936px;top:216px;width:118.4px;height:27.3px;background:#f0f0f0;border:1px solid #adadad;box-sizing:border-box;box-shadow:inset 1px 1px 0 #fdfdfd;"></div>
<div class="t" style="left:695.2px;width:600px;text-align:center;top:221.15px;font-size:15px;line-height:18px;color:#000;transform:scale(0.875,1.12);transform-origin:50% 14px;">Reset HTML</div>
<div class="b" style="left:936px;top:248.5px;width:118.4px;height:27.7px;background:#f0f0f0;border:1px solid #adadad;box-sizing:border-box;box-shadow:inset 1px 1px 0 #fdfdfd;"></div>
<div class="t" style="left:695.2px;width:600px;text-align:center;top:253.85px;font-size:15px;line-height:18px;color:#000;transform:scale(0.875,1.12);transform-origin:50% 14px;">Access</div>
<div class="b" style="left:936px;top:281.3px;width:118.4px;height:27.3px;background:#f0f0f0;border:1px solid #adadad;box-sizing:border-box;box-shadow:inset 1px 1px 0 #fdfdfd;"></div>
<div class="t" style="left:695.2px;width:600px;text-align:center;top:286.45px;font-size:15px;line-height:18px;color:#000;transform:scale(0.875,1.12);transform-origin:50% 14px;">Cache</div>
<div class="b" style="left:936px;top:313.8px;width:118.4px;height:27.3px;background:#f0f0f0;border:1px solid #adadad;box-sizing:border-box;box-shadow:inset 1px 1px 0 #fdfdfd;"></div>
<div class="t" style="left:695.2px;width:600px;text-align:center;top:318.95px;font-size:15px;line-height:18px;color:#000;transform:scale(0.875,1.12);transform-origin:50% 14px;">Direct</div>
<div class="b" style="left:936px;top:346.2px;width:118.4px;height:27.4px;background:#f0f0f0;border:1px solid #adadad;box-sizing:border-box;box-shadow:inset 1px 1px 0 #fdfdfd;"></div>
<div class="t" style="left:695.2px;width:600px;text-align:center;top:351.4px;font-size:15px;line-height:18px;color:#000;transform:scale(0.875,1.12);transform-origin:50% 14px;">Connections</div>
<div class="b" style="left:936px;top:378.7px;width:118.4px;height:27.3px;background:#f0f0f0;border:1px solid #adadad;box-sizing:border-box;box-shadow:inset 1px 1px 0 #fdfdfd;"></div>
<div class="t" style="left:695.2px;width:600px;text-align:center;top:383.85px;font-size:15px;line-height:18px;color:#000;transform:scale(0.875,1.12);transform-origin:50% 14px;">Cache Contents</div>
<div class="b" style="left:140.2px;top:94.3px;width:451.9px;height:638.7px;background:#f0f0f0;border:1.6px solid #161616;box-sizing:border-box;"></div>
<div class="b" style="left:141.8px;top:95.9px;width:447.4px;height:27.1px;background:#c0c0c0;box-shadow:inset 0 1px 0 rgba(255,255,255,0.35);"></div>
<div class="t" style="left:147.6px;top:103px;font-size:15px;line-height:18px;color:#fff;transform:scale(0.875,1.12);transform-origin:0 14px;">Resources</div>
<div class="b" style="left:546.2px;top:100.8px;width:18.5px;height:17.8px;background:#efebef;border:1.5px solid #404040;box-sizing:border-box;box-shadow:inset -1px -1px 0 #9a9a9a, inset 1px 1px 0 #fff;"></div>
<div class="b" style="left:549.4px;top:104.3px;width:12.1px;height:10.8px;border:1.6px solid #333;border-top-width:2.6px;box-sizing:border-box;"></div>
<div class="b" style="left:567.3px;top:100.8px;width:18.5px;height:17.8px;background:#efebef;border:1.5px solid #404040;box-sizing:border-box;box-shadow:inset -1px -1px 0 #9a9a9a, inset 1px 1px 0 #fff;"></div>
<svg class="b" style="left:567.3px;top:100.8px" width="18.5" height="17.8" viewBox="0 0 18 18"><path d="M5 5 L13 13 M13 5 L5 13" stroke="#222" stroke-width="2.4"/></svg>
<div class="t" style="right:758.6px;top:135px;font-size:15px;line-height:18px;color:#000;transform:scale(0.875,1.12);transform-origin:100% 14px;">Uptime:</div>
<div class="b" style="left:328.6px;top:132px;width:157.1px;height:22px;background:#f0f0f0;border:1px solid #a8a8a8;box-sizing:border-box;"></div>
<div class="t" style="left:331.5px;top:135px;font-size:15px;line-height:18px;color:#000;transform:scale(0.875,1.12);transform-origin:0 14px;">27d 14:39:38</div>
<div class="t" style="right:758.6px;top:178.6px;font-size:15px;line-height:18px;color:#000;transform:scale(0.875,1.12);transform-origin:100% 14px;">Free Memory:</div>
<div class="b" style="left:328.6px;top:175.6px;width:157.1px;height:22px;background:#f0f0f0;border:1px solid #a8a8a8;box-sizing:border-box;"></div>
<div class="t" style="left:331.5px;top:178.6px;font-size:15px;line-height:18px;color:#000;transform:scale(0.875,1.12);transform-origin:0 14px;">20.8 MiB</div>
<div class="t" style="right:758.6px;top:209.7px;font-size:15px;line-height:18px;color:#000;transform:scale(0.875,1.12);transform-origin:100% 14px;">Total Memory:</div>
<div class="b" style="left:328.6px;top:206.7px;width:157.1px;height:22px;background:#f0f0f0;border:1px solid #a8a8a8;box-sizing:border-box;"></div>
<div class="t" style="left:331.5px;top:209.7px;font-size:15px;line-height:18px;color:#000;transform:scale(0.875,1.12);transform-origin:0 14px;">128.0 MiB</div>
<div class="t" style="right:758.6px;top:253.7px;font-size:15px;line-height:18px;color:#000;transform:scale(0.875,1.12);transform-origin:100% 14px;">CPU:</div>
<div class="b" style="left:328.6px;top:250.7px;width:157.1px;height:22px;background:#f0f0f0;border:1px solid #a8a8a8;box-sizing:border-box;"></div>
<div class="t" style="left:331.5px;top:253.7px;font-size:15px;line-height:18px;color:#000;transform:scale(0.875,1.12);transform-origin:0 14px;">MIPS 74Kc V4.12</div>
<div class="t" style="right:758.6px;top:284.8px;font-size:15px;line-height:18px;color:#000;transform:scale(0.875,1.12);transform-origin:100% 14px;">CPU Count:</div>
<div class="b" style="left:328.6px;top:281.8px;width:157.1px;height:22px;background:#f0f0f0;border:1px solid #a8a8a8;box-sizing:border-box;"></div>
<div class="t" style="left:331.5px;top:284.8px;font-size:15px;line-height:18px;color:#000;transform:scale(0.875,1.12);transform-origin:0 14px;">1</div>
<div class="t" style="right:758.6px;top:316.5px;font-size:15px;line-height:18px;color:#000;transform:scale(0.875,1.12);transform-origin:100% 14px;">CPU Frequency:</div>
<div class="b" style="left:328.6px;top:313.5px;width:157.1px;height:22px;background:#f0f0f0;border:1px solid #a8a8a8;box-sizing:border-box;"></div>
<div class="t" style="left:331.5px;top:316.5px;font-size:15px;line-height:18px;color:#000;transform:scale(0.875,1.12);transform-origin:0 14px;">600 MHz</div>
<div class="t" style="right:758.6px;top:348px;font-size:15px;line-height:18px;color:#000;transform:scale(0.875,1.12);transform-origin:100% 14px;">CPU Load:</div>
<div class="b" style="left:328.6px;top:345px;width:157.1px;height:22px;background:#f0f0f0;border:1px solid #a8a8a8;box-sizing:border-box;"></div>
<div class="t" style="left:331.5px;top:348px;font-size:15px;line-height:18px;color:#000;transform:scale(0.875,1.12);transform-origin:0 14px;">14 %</div>
<div class="t" style="right:758.6px;top:391.6px;font-size:15px;line-height:18px;color:#000;transform:scale(0.875,1.12);transform-origin:100% 14px;">Free HDD Space:</div>
<div class="b" style="left:328.6px;top:388.6px;width:157.1px;height:22px;background:#f0f0f0;border:1px solid #a8a8a8;box-sizing:border-box;"></div>
<div class="t" style="left:331.5px;top:391.6px;font-size:15px;line-height:18px;color:#000;transform:scale(0.875,1.12);transform-origin:0 14px;">77.9 MiB</div>
<div class="t" style="right:758.6px;top:423px;font-size:15px;line-height:18px;color:#000;transform:scale(0.875,1.12);transform-origin:100% 14px;">Total HDD Size:</div>
<div class="b" style="left:328.6px;top:420px;width:157.1px;height:22px;background:#f0f0f0;border:1px solid #a8a8a8;box-sizing:border-box;"></div>
<div class="t" style="left:331.5px;top:423px;font-size:15px;line-height:18px;color:#000;transform:scale(0.875,1.12);transform-origin:0 14px;">128.0 MiB</div>
<div class="t" style="right:758.6px;top:467px;font-size:15px;line-height:18px;color:#000;transform:scale(0.875,1.12);transform-origin:100% 14px;">Sector Writes Since Reboot:</div>
<div class="b" style="left:328.6px;top:464px;width:157.1px;height:22px;background:#f0f0f0;border:1px solid #a8a8a8;box-sizing:border-box;"></div>
<div class="t" style="left:331.5px;top:467px;font-size:15px;line-height:18px;color:#000;transform:scale(0.875,1.12);transform-origin:0 14px;">6 772 042</div>
<div class="t" style="right:758.6px;top:498px;font-size:15px;line-height:18px;color:#000;transform:scale(0.875,1.12);transform-origin:100% 14px;">Total Sector Writes:</div>
<div class="b" style="left:328.6px;top:495px;width:157.1px;height:22px;background:#f0f0f0;border:1px solid #a8a8a8;box-sizing:border-box;"></div>
<div class="t" style="left:331.5px;top:498px;font-size:15px;line-height:18px;color:#000;transform:scale(0.875,1.12);transform-origin:0 14px;">14 297 675</div>
<div class="t" style="right:758.6px;top:529.7px;font-size:15px;line-height:18px;color:#000;transform:scale(0.875,1.12);transform-origin:100% 14px;">Bad Blocks:</div>
<div class="b" style="left:328.6px;top:526.7px;width:157.1px;height:22px;background:#f0f0f0;border:1px solid #a8a8a8;box-sizing:border-box;"></div>
<div class="t" style="left:331.5px;top:529.7px;font-size:15px;line-height:18px;color:#000;transform:scale(0.875,1.12);transform-origin:0 14px;">0.6 %</div>
<div class="t" style="right:758.6px;top:573.3px;font-size:15px;line-height:18px;color:#000;transform:scale(0.875,1.12);transform-origin:100% 14px;">Architecture Name:</div>
<div class="b" style="left:328.6px;top:570.3px;width:157.1px;height:22px;background:#f0f0f0;border:1px solid #a8a8a8;box-sizing:border-box;"></div>
<div class="t" style="left:331.5px;top:573.3px;font-size:15px;line-height:18px;color:#000;transform:scale(0.875,1.12);transform-origin:0 14px;">mipsbe</div>
<div class="t" style="right:758.6px;top:604.4px;font-size:15px;line-height:18px;color:#000;transform:scale(0.875,1.12);transform-origin:100% 14px;">Board Name:</div>
<div class="b" style="left:328.6px;top:601.4px;width:157.1px;height:22px;background:#f0f0f0;border:1px solid #a8a8a8;box-sizing:border-box;"></div>
<div class="t" style="left:331.5px;top:604.4px;font-size:15px;line-height:18px;color:#000;transform:scale(0.875,1.12);transform-origin:0 14px;">RB951Ui-2HnD</div>
<div class="t" style="right:758.6px;top:635.9px;font-size:15px;line-height:18px;color:#000;transform:scale(0.875,1.12);transform-origin:100% 14px;">Version:</div>
<div class="b" style="left:328.6px;top:632.9px;width:157.1px;height:22px;background:#f0f0f0;border:1px solid #a8a8a8;box-sizing:border-box;"></div>
<div class="t" style="left:331.5px;top:635.9px;font-size:15px;line-height:18px;color:#000;transform:scale(0.875,1.12);transform-origin:0 14px;">6.37.3 (stable)</div>
<div class="t" style="right:758.6px;top:667.3px;font-size:15px;line-height:18px;color:#000;transform:scale(0.875,1.12);transform-origin:100% 14px;">Build Time:</div>
<div class="b" style="left:328.6px;top:664.3px;width:157.1px;height:22px;background:#f0f0f0;border:1px solid #a8a8a8;box-sizing:border-box;"></div>
<div class="t" style="left:331.5px;top:667.3px;font-size:15px;line-height:18px;color:#000;transform:scale(0.875,1.12);transform-origin:0 14px;">Nov/28/2016 11:11:46</div>
<div class="t" style="right:758.6px;top:698.5px;font-size:15px;line-height:18px;color:#000;transform:scale(0.875,1.12);transform-origin:100% 14px;">Factory Software:</div>
<div class="b" style="left:328.6px;top:695.5px;width:157.1px;height:22px;background:#f0f0f0;border:1px solid #a8a8a8;box-sizing:border-box;"></div>
<div class="t" style="left:331.5px;top:698.5px;font-size:15px;line-height:18px;color:#000;transform:scale(0.875,1.12);transform-origin:0 14px;">3.41</div>
<div class="b" style="left:152.5px;top:165.5px;width:333.5px;height:1px;background:#d9d9d9;"></div>
<div class="b" style="left:152.5px;top:166.5px;width:333.5px;height:1px;background:#fbfbfb;"></div>
<div class="b" style="left:152.5px;top:240.5px;width:333.5px;height:1px;background:#d9d9d9;"></div>
<div class="b" style="left:152.5px;top:241.5px;width:333.5px;height:1px;background:#fbfbfb;"></div>
<div class="b" style="left:152.5px;top:378.3px;width:333.5px;height:1px;background:#d9d9d9;"></div>
<div class="b" style="left:152.5px;top:379.3px;width:333.5px;height:1px;background:#fbfbfb;"></div>
<div class="b" style="left:152.5px;top:453.5px;width:333.5px;height:1px;background:#d9d9d9;"></div>
<div class="b" style="left:152.5px;top:454.5px;width:333.5px;height:1px;background:#fbfbfb;"></div>
<div class="b" style="left:152.5px;top:559px;width:333.5px;height:1px;background:#d9d9d9;"></div>
<div class="b" style="left:152.5px;top:560px;width:333.5px;height:1px;background:#fbfbfb;"></div>
<div class="b" style="left:506.3px;top:130.6px;width:73.1px;height:28.3px;background:#f0f0f0;border:1.5px solid #1a1a1a;box-sizing:border-box;"></div>
<div class="t" style="left:242.85px;width:600px;text-align:center;top:136px;font-size:15px;line-height:18px;color:#000;transform:scale(0.875,1.12);transform-origin:50% 14px;">OK</div>
<div class="b" style="left:506.3px;top:170.6px;width:73.1px;height:28.1px;background:#f0f0f0;border:1px solid #adadad;box-sizing:border-box;box-shadow:inset 1px 1px 0 #fdfdfd;"></div>
<div class="t" style="left:242.85px;width:600px;text-align:center;top:176.65px;font-size:15px;line-height:18px;color:#000;transform:scale(0.875,1.12);transform-origin:50% 14px;">PCI</div>
<div class="b" style="left:506.3px;top:202.8px;width:73.1px;height:28.4px;background:#f0f0f0;border:1px solid #adadad;box-sizing:border-box;box-shadow:inset 1px 1px 0 #fdfdfd;"></div>
<div class="t" style="left:242.85px;width:600px;text-align:center;top:209px;font-size:15px;line-height:18px;color:#000;transform:scale(0.875,1.12);transform-origin:50% 14px;">USB</div>
<div class="b" style="left:506.3px;top:236.2px;width:73.1px;height:27.8px;background:#f0f0f0;border:1px solid #adadad;box-sizing:border-box;box-shadow:inset 1px 1px 0 #fdfdfd;"></div>
<div class="t" style="left:242.85px;width:600px;text-align:center;top:242.1px;font-size:15px;line-height:18px;color:#000;transform:scale(0.875,1.12);transform-origin:50% 14px;">CPU</div>
<div class="b" style="left:506.3px;top:268.2px;width:73.1px;height:27.8px;background:#f0f0f0;border:1px solid #adadad;box-sizing:border-box;box-shadow:inset 1px 1px 0 #fdfdfd;"></div>
<div class="t" style="left:242.85px;width:600px;text-align:center;top:274.1px;font-size:15px;line-height:18px;color:#000;transform:scale(0.875,1.12);transform-origin:50% 14px;">IRQ</div>
<div class="b" style="left:328.8px;top:684.9px;width:736px;height:329.7px;background:#f0f0f0;border:1.6px solid #161616;box-sizing:border-box;"></div>
<div class="b" style="left:330.4px;top:686.5px;width:731.5px;height:26.5px;background:#4f51cc;box-shadow:inset 0 1px 0 rgba(255,255,255,0.35);"></div>
<div class="t" style="left:336px;top:694px;font-size:15px;line-height:18px;color:#fff;transform:scale(0.875,1.12);transform-origin:0 14px;">Firewall</div>
<div class="b" style="left:1018px;top:691.4px;width:17.5px;height:17.5px;background:#efebef;border:1.5px solid #404040;box-sizing:border-box;box-shadow:inset -1px -1px 0 #9a9a9a, inset 1px 1px 0 #fff;"></div>
<div class="b" style="left:1021.2px;top:694.9px;width:11.1px;height:10.5px;border:1.6px solid #333;border-top-width:2.6px;box-sizing:border-box;"></div>
<div class="b" style="left:1039.4px;top:691.4px;width:17.5px;height:17.5px;background:#efebef;border:1.5px solid #404040;box-sizing:border-box;box-shadow:inset -1px -1px 0 #9a9a9a, inset 1px 1px 0 #fff;"></div>
<svg class="b" style="left:1039.4px;top:691.4px" width="17.5" height="17.5" viewBox="0 0 18 18"><path d="M5 5 L13 13 M13 5 L5 13" stroke="#222" stroke-width="2.4"/></svg>
<div class="b" style="left:336.5px;top:743px;width:722.5px;height:267px;background:#f0f0f0;border-top:1px solid #fff;border-left:1px solid #fff;border-right:1.5px solid #b4b4b4;border-bottom:1.5px solid #b4b4b4;box-sizing:border-box;"></div>
<div class="b" style="left:336.5px;top:718.7px;width:77.9px;height:24.7px;background:#d9d9d9;border-top:1px solid #dedede;border-right:1px solid #c6c6c6;box-shadow:inset 1px 0 0 #ececec;box-sizing:border-box;"></div>
<div class="t" style="left:75.45px;width:600px;text-align:center;top:723px;font-size:15px;line-height:18px;color:#000;transform:scale(0.875,1.12);transform-origin:50% 14px;">Filter Rules</div>
<div class="b" style="left:414.4px;top:718.7px;width:42.9px;height:24.7px;background:#d9d9d9;border-top:1px solid #dedede;border-right:1px solid #c6c6c6;box-shadow:inset 1px 0 0 #ececec;box-sizing:border-box;"></div>
<div class="t" style="left:135.85px;width:600px;text-align:center;top:723px;font-size:15px;line-height:18px;color:#000;transform:scale(0.875,1.12);transform-origin:50% 14px;">NAT</div>
<div class="b" style="left:457.3px;top:718.7px;width:58.1px;height:24.7px;background:#d9d9d9;border-top:1px solid #dedede;border-right:1px solid #c6c6c6;box-shadow:inset 1px 0 0 #ececec;box-sizing:border-box;"></div>
<div class="t" style="left:186.35px;width:600px;text-align:center;top:723px;font-size:15px;line-height:18px;color:#000;transform:scale(0.875,1.12);transform-origin:50% 14px;">Mangle</div>
<div class="b" style="left:515.4px;top:718.7px;width:43.3px;height:24.7px;background:#d9d9d9;border-top:1px solid #dedede;border-right:1px solid #c6c6c6;box-shadow:inset 1px 0 0 #ececec;box-sizing:border-box;"></div>
<div class="t" style="left:237.05px;width:600px;text-align:center;top:723px;font-size:15px;line-height:18px;color:#000;transform:scale(0.875,1.12);transform-origin:50% 14px;">Raw</div>
<div class="b" style="left:558.7px;top:718.7px;width:93px;height:24.7px;background:#d9d9d9;border-top:1px solid #dedede;border-right:1px solid #c6c6c6;box-shadow:inset 1px 0 0 #ececec;box-sizing:border-box;"></div>
<div class="t" style="left:305.2px;width:600px;text-align:center;top:723px;font-size:15px;line-height:18px;color:#000;transform:scale(0.875,1.12);transform-origin:50% 14px;">Service Ports</div>
<div class="b" style="left:651.7px;top:718.7px;width:85.9px;height:24.7px;background:#d9d9d9;border-top:1px solid #dedede;border-right:1px solid #c6c6c6;box-shadow:inset 1px 0 0 #ececec;box-sizing:border-box;"></div>
<div class="t" style="left:394.65px;width:600px;text-align:center;top:723px;font-size:15px;line-height:18px;color:#000;transform:scale(0.875,1.12);transform-origin:50% 14px;">Connections</div>
<div class="b" style="left:834.5px;top:718.7px;width:111.5px;height:24.7px;background:#d9d9d9;border-top:1px solid #dedede;border-right:1px solid #c6c6c6;box-shadow:inset 1px 0 0 #ececec;box-sizing:border-box;"></div>
<div class="t" style="left:590.25px;width:600px;text-align:center;top:723px;font-size:15px;line-height:18px;color:#000;transform:scale(0.875,1.12);transform-origin:50% 14px;">Layer7 Protocols</div>
<div class="b" style="left:737.6px;top:714.6px;width:96.9px;height:30.3px;background:#f0f0f0;border-top:1px solid #fafafa;border-left:1px solid #fafafa;border-right:1px solid #c0c0c0;box-sizing:border-box;"></div>
<div class="t" style="left:486.05px;width:600px;text-align:center;top:720px;font-size:15px;line-height:18px;color:#000;transform:scale(0.875,1.12);transform-origin:50% 14px;">Address Lists</div>
<div class="b" style="left:335.8px;top:748.7px;width:27.2px;height:28.1px;background:#f0f0f0;border:1px solid #b4b4b4;box-sizing:border-box;box-shadow:inset 1px 1px 0 #fafafa;"></div>
<svg class="b" style="left:340.4px;top:753.7px" width="18" height="18" viewBox="0 0 18 18"><path d="M7 2.5h4v4.5h4.5v4h-4.5v4.5h-4v-4.5h-4.5v-4h4.5z" fill="#0000ff" stroke="#000" stroke-width="1"/></svg>
<div class="b" style="left:367.5px;top:748.7px;width:28.2px;height:28.1px;background:#f0f0f0;border:1px solid #b4b4b4;box-sizing:border-box;box-shadow:inset 1px 1px 0 #fafafa;"></div>
<svg class="b" style="left:372.6px;top:753.7px" width="18" height="18" viewBox="0 0 18 18"><rect x="3" y="7.5" width="12" height="3.2" fill="#f4f4f4" stroke="#b8b8b8" stroke-width="1"/></svg>
<div class="b" style="left:407.3px;top:748.7px;width:28.2px;height:28.1px;background:#f0f0f0;border:1px solid #b4b4b4;box-sizing:border-box;box-shadow:inset 1px 1px 0 #fafafa;"></div>
<svg class="b" style="left:412.4px;top:753.7px" width="18" height="18" viewBox="0 0 18 18"><path d="M2.5 9.5 L6.5 13.5 L15.5 4.5" fill="none" stroke="#bdbdbd" stroke-width="3"/><path d="M2.5 9.5 L6.5 13.5 L15.5 4.5" fill="none" stroke="#f4f4f4" stroke-width="1.4"/></svg>
<div class="b" style="left:440.4px;top:748.7px;width:27.5px;height:28.1px;background:#f0f0f0;border:1px solid #b4b4b4;box-sizing:border-box;box-shadow:inset 1px 1px 0 #fafafa;"></div>
<svg class="b" style="left:445.15px;top:753.7px" width="18" height="18" viewBox="0 0 18 18"><path d="M3.5 3.5 L14.5 14.5 M14.5 3.5 L3.5 14.5" fill="none" stroke="#bdbdbd" stroke-width="3.4"/><path d="M3.5 3.5 L14.5 14.5 M14.5 3.5 L3.5 14.5" fill="none" stroke="#f4f4f4" stroke-width="1.6"/></svg>
<div class="b" style="left:480.2px;top:748.7px;width:28.2px;height:28.1px;background:#f0f0f0;border:1px solid #b4b4b4;box-sizing:border-box;box-shadow:inset 1px 1px 0 #fafafa;"></div>
<svg class="b" style="left:485.3px;top:753.7px" width="18" height="18" viewBox="0 0 18 18"><path d="M5 4.5 H15.5 V13.5 H2.5 V7 Z" fill="#f4f4f4" stroke="#8c8c8c" stroke-width="1.2"/><path d="M8 7.5h2M11 7.5h2M8 10h5" stroke="#8c8c8c" stroke-width="1"/></svg>
<div class="b" style="left:520px;top:748.7px;width:28.2px;height:28.1px;background:#f0f0f0;border:1px solid #b4b4b4;box-sizing:border-box;box-shadow:inset 1px 1px 0 #fafafa;"></div>
<svg class="b" style="left:525.1px;top:753.7px" width="18" height="18" viewBox="0 0 18 18"><path d="M2.5 2.5 H15.5 L10.5 8.5 V15.5 H7.5 V8.5 Z" fill="#8aa0c8" stroke="#1a1a2a" stroke-width="1.3"/><path d="M4 4 H14" stroke="#2a2a3a" stroke-width="1.5"/></svg>
<div class="b" style="left:922.7px;top:755.3px;width:74.5px;height:21.5px;background:#fff;border:1px solid #a8a8a8;box-sizing:border-box;"></div>
<div class="t" style="left:928.5px;top:758px;font-size:15px;line-height:18px;color:#a8a8a8;transform:scale(0.875,1.12);transform-origin:0 14px;font-style:italic;">Find</div>
<div class="b" style="left:1007px;top:755.3px;width:22.7px;height:21.5px;background:#fff;border:1px solid #a8a8a8;box-sizing:border-box;"></div>
<div class="t" style="left:1010px;top:758px;font-size:15px;line-height:18px;color:#000;transform:scale(0.875,1.12);transform-origin:0 14px;">z</div>
<div class="b" style="left:1033.8px;top:755.3px;width:20.4px;height:21.5px;background:#f0f0f0;border:1px solid #b4b4b4;box-sizing:border-box;"></div>
<svg class="b" style="left:1038px;top:760.05px" width="12" height="12" viewBox="0 0 12 12"><path d="M1.5 1.5 H10.5" stroke="#111" stroke-width="1.6"/><path d="M4 3.8 H8 V6.2 H10.8 L6 10.8 L1.2 6.2 H4 Z" fill="#111"/></svg>
<div class="b" style="left:335.1px;top:782.8px;width:721.9px;height:199.7px;background:#fff;border-left:1px solid #a8a8a8;box-sizing:border-box;"></div>
<div class="b" style="left:335.1px;top:783.3px;width:721.9px;height:19.9px;background:#f0f0f0;border-top:1px solid #a8a8a8;border-bottom:1px solid #a8a8a8;box-shadow:inset 0 1px 0 #fff;box-sizing:border-box;"></div>
<div class="b" style="left:355.2px;top:783px;width:1px;height:19px;background:#a8a8a8;"></div>
<div class="b" style="left:356.2px;top:784px;width:1px;height:18px;background:#fff;"></div>
<div class="b" style="left:415px;top:783px;width:1px;height:19px;background:#a8a8a8;"></div>
<div class="b" style="left:416px;top:784px;width:1px;height:18px;background:#fff;"></div>
<div class="b" style="left:529px;top:783px;width:1px;height:19px;background:#a8a8a8;"></div>
<div class="b" style="left:530px;top:784px;width:1px;height:18px;background:#fff;"></div>
<div class="b" style="left:595.2px;top:783px;width:1px;height:19px;background:#a8a8a8;"></div>
<div class="b" style="left:596.2px;top:784px;width:1px;height:18px;background:#fff;"></div>
<div class="b" style="left:665.5px;top:783px;width:1px;height:19px;background:#a8a8a8;"></div>
<div class="b" style="left:666.5px;top:784px;width:1px;height:18px;background:#fff;"></div>
<div class="b" style="left:1035.4px;top:783px;width:1px;height:19px;background:#a8a8a8;"></div>
<div class="b" style="left:1036.4px;top:784px;width:1px;height:18px;background:#fff;"></div>
<div class="t" style="left:359px;top:784px;font-size:15px;line-height:18px;color:#000;transform:scale(0.875,1.12);transform-origin:0 14px;">Name</div>
<div class="t" style="left:419px;top:784px;font-size:15px;line-height:18px;color:#000;transform:scale(0.875,1.12);transform-origin:0 14px;">Address</div>
<div class="t" style="left:533px;top:784px;font-size:15px;line-height:18px;color:#000;transform:scale(0.875,1.12);transform-origin:0 14px;">Timeout</div>
<div class="t" style="left:598px;top:784px;font-size:15px;line-height:18px;color:#000;transform:scale(0.875,1.12);transform-origin:0 14px;">Comment</div>
<svg class="b" style="left:404px;top:788px" width="10" height="10" viewBox="0 0 10 10"><path d="M1 8.5 L5 1.5 L9 8.5" fill="none" stroke="#c8c8c8" stroke-width="1.2"/></svg>
<svg class="b" style="left:519px;top:788px" width="10" height="10" viewBox="0 0 10 10"><path d="M1 8.5 L5 1.5 L9 8.5" fill="none" stroke="#c8c8c8" stroke-width="1.2"/></svg>
<svg class="b" style="left:1039px;top:788px" width="14" height="8" viewBox="0 0 14 8"><path d="M1 1 L13 1 L7 7.5 Z" fill="#111"/></svg>
<div class="b" style="left:336px;top:820.96px;width:699.4px;height:1px;background:#e9e9e9;"></div>
<div class="b" style="left:364.7px;top:806.9px;width:9px;height:9px;border-radius:50%;box-sizing:border-box;border:1.3px solid #0c1f12;background:radial-gradient(circle at 38% 32%,#c8f5d8 0,#3cc078 38%,#24985a 100%);"></div>
<div class="t" style="left:378px;top:803px;font-size:15px;line-height:18px;color:#000;transform:scale(0.875,1.12);transform-origin:0 14px;">z</div>
<div class="t" style="left:419px;top:803.5px;font-size:15px;line-height:18px;color:#000;transform:scale(0.875,1.12);transform-origin:0 14px;">1.32.194.195</div>
<div class="b" style="left:336px;top:839.72px;width:699.4px;height:1px;background:#e9e9e9;"></div>
<div class="b" style="left:364.7px;top:825.66px;width:9px;height:9px;border-radius:50%;box-sizing:border-box;border:1.3px solid #0c1f12;background:radial-gradient(circle at 38% 32%,#c8f5d8 0,#3cc078 38%,#24985a 100%);"></div>
<div class="t" style="left:378px;top:821.76px;font-size:15px;line-height:18px;color:#000;transform:scale(0.875,1.12);transform-origin:0 14px;">z</div>
<div class="t" style="left:419px;top:822.26px;font-size:15px;line-height:18px;color:#000;transform:scale(0.875,1.12);transform-origin:0 14px;">1.36.236.74</div>
<div class="b" style="left:336px;top:858.48px;width:699.4px;height:1px;background:#e9e9e9;"></div>
<div class="b" style="left:364.7px;top:844.42px;width:9px;height:9px;border-radius:50%;box-sizing:border-box;border:1.3px solid #0c1f12;background:radial-gradient(circle at 38% 32%,#c8f5d8 0,#3cc078 38%,#24985a 100%);"></div>
<div class="t" style="left:378px;top:840.52px;font-size:15px;line-height:18px;color:#000;transform:scale(0.875,1.12);transform-origin:0 14px;">z</div>
<div class="t" style="left:419px;top:841.02px;font-size:15px;line-height:18px;color:#000;transform:scale(0.875,1.12);transform-origin:0 14px;">1.55.188.254</div>
<div class="b" style="left:336px;top:877.24px;width:699.4px;height:1px;background:#e9e9e9;"></div>
<div class="b" style="left:364.7px;top:863.18px;width:9px;height:9px;border-radius:50%;box-sizing:border-box;border:1.3px solid #0c1f12;background:radial-gradient(circle at 38% 32%,#c8f5d8 0,#3cc078 38%,#24985a 100%);"></div>
<div class="t" style="left:378px;top:859.28px;font-size:15px;line-height:18px;color:#000;transform:scale(0.875,1.12);transform-origin:0 14px;">z</div>
<div class="t" style="left:419px;top:859.78px;font-size:15px;line-height:18px;color:#000;transform:scale(0.875,1.12);transform-origin:0 14px;">1.55.189.76</div>
<div class="b" style="left:336px;top:896px;width:699.4px;height:1px;background:#e9e9e9;"></div>
<div class="b" style="left:364.7px;top:881.94px;width:9px;height:9px;border-radius:50%;box-sizing:border-box;border:1.3px solid #0c1f12;background:radial-gradient(circle at 38% 32%,#c8f5d8 0,#3cc078 38%,#24985a 100%);"></div>
<div class="t" style="left:378px;top:878.04px;font-size:15px;line-height:18px;color:#000;transform:scale(0.875,1.12);transform-origin:0 14px;">z</div>
<div class="t" style="left:419px;top:878.54px;font-size:15px;line-height:18px;color:#000;transform:scale(0.875,1.12);transform-origin:0 14px;">1.179.201.18</div>
<div class="b" style="left:336px;top:914.76px;width:699.4px;height:1px;background:#e9e9e9;"></div>
<div class="b" style="left:364.7px;top:900.7px;width:9px;height:9px;border-radius:50%;box-sizing:border-box;border:1.3px solid #0c1f12;background:radial-gradient(circle at 38% 32%,#c8f5d8 0,#3cc078 38%,#24985a 100%);"></div>
<div class="t" style="left:378px;top:896.8px;font-size:15px;line-height:18px;color:#000;transform:scale(0.875,1.12);transform-origin:0 14px;">z</div>
<div class="t" style="left:419px;top:897.3px;font-size:15px;line-height:18px;color:#000;transform:scale(0.875,1.12);transform-origin:0 14px;">2.16.10.11</div>
<div class="b" style="left:336px;top:933.52px;width:699.4px;height:1px;background:#e9e9e9;"></div>
<div class="b" style="left:364.7px;top:919.46px;width:9px;height:9px;border-radius:50%;box-sizing:border-box;border:1.3px solid #0c1f12;background:radial-gradient(circle at 38% 32%,#c8f5d8 0,#3cc078 38%,#24985a 100%);"></div>
<div class="t" style="left:378px;top:915.56px;font-size:15px;line-height:18px;color:#000;transform:scale(0.875,1.12);transform-origin:0 14px;">z</div>
<div class="t" style="left:419px;top:916.06px;font-size:15px;line-height:18px;color:#000;transform:scale(0.875,1.12);transform-origin:0 14px;">2.16.10.26</div>
<div class="b" style="left:336px;top:952.28px;width:699.4px;height:1px;background:#e9e9e9;"></div>
<div class="b" style="left:364.7px;top:938.22px;width:9px;height:9px;border-radius:50%;box-sizing:border-box;border:1.3px solid #0c1f12;background:radial-gradient(circle at 38% 32%,#c8f5d8 0,#3cc078 38%,#24985a 100%);"></div>
<div class="t" style="left:378px;top:934.32px;font-size:15px;line-height:18px;color:#000;transform:scale(0.875,1.12);transform-origin:0 14px;">z</div>
<div class="t" style="left:419px;top:934.82px;font-size:15px;line-height:18px;color:#000;transform:scale(0.875,1.12);transform-origin:0 14px;">2.16.10.33</div>
<div class="b" style="left:336px;top:971.04px;width:699.4px;height:1px;background:#e9e9e9;"></div>
<div class="b" style="left:364.7px;top:956.98px;width:9px;height:9px;border-radius:50%;box-sizing:border-box;border:1.3px solid #0c1f12;background:radial-gradient(circle at 38% 32%,#c8f5d8 0,#3cc078 38%,#24985a 100%);"></div>
<div class="t" style="left:378px;top:953.08px;font-size:15px;line-height:18px;color:#000;transform:scale(0.875,1.12);transform-origin:0 14px;">z</div>
<div class="t" style="left:419px;top:953.58px;font-size:15px;line-height:18px;color:#000;transform:scale(0.875,1.12);transform-origin:0 14px;">2.16.10.41</div>
<div class="b" style="left:364.7px;top:975.74px;width:9px;height:9px;border-radius:50%;box-sizing:border-box;border:1.3px solid #0c1f12;background:radial-gradient(circle at 38% 32%,#c8f5d8 0,#3cc078 38%,#24985a 100%);"></div>
<div class="t" style="left:378px;top:971.84px;font-size:15px;line-height:18px;color:#000;transform:scale(0.875,1.12);transform-origin:0 14px;">z</div>
<div class="t" style="left:419px;top:972.34px;font-size:15px;line-height:18px;color:#000;transform:scale(0.875,1.12);transform-origin:0 14px;">2.16.10.43</div>
<div class="b" style="left:355.2px;top:802.5px;width:1px;height:180px;background:#e9e9e9;"></div>
<div class="b" style="left:415px;top:802.5px;width:1px;height:180px;background:#e9e9e9;"></div>
<div class="b" style="left:529px;top:802.5px;width:1px;height:180px;background:#e9e9e9;"></div>
<div class="b" style="left:595.2px;top:802.5px;width:1px;height:180px;background:#e9e9e9;"></div>
<div class="b" style="left:665.5px;top:802.5px;width:1px;height:180px;background:#e9e9e9;"></div>
<div class="b" style="left:336.5px;top:952.7px;width:696.5px;height:18.2px;border:1px dotted #8a8a8a;box-sizing:border-box;"></div>
<div class="b" style="left:1035.4px;top:802.5px;width:21.6px;height:180px;background:#d8d8d8;border-left:1px solid #c8c8c8;box-sizing:border-box;"></div>
<div class="b" style="left:1035.9px;top:802.5px;width:20.6px;height:19.5px;background:#f0f0f0;border:1px solid #d0d0d0;box-sizing:border-box;"></div>
<div class="b" style="left:1035.9px;top:822px;width:20.6px;height:20px;background:#f0f0f0;border:1px solid #c8c8c8;box-sizing:border-box;"></div>
<div class="b" style="left:1035.9px;top:963.7px;width:20.6px;height:18.8px;background:#f0f0f0;border:1px solid #c8c8c8;box-sizing:border-box;"></div>
<svg class="b" style="left:1040px;top:966px" width="12" height="12" viewBox="0 0 12 12"><path d="M6 11 L1 6 H3.8 V1.5 H8.2 V6 H11 Z" fill="#000"/></svg>
<svg class="b" style="left:1040px;top:806px" width="12" height="12" viewBox="0 0 12 12"><path d="M6 1 L1 6 H3.8 V10.5 H8.2 V6 H11 Z" fill="#000"/></svg>
<div class="b" style="left:336.5px;top:982.5px;width:720.5px;height:26.5px;background:#f0f0f0;border-top:1px solid #b8b8b8;box-sizing:border-box;"></div>
<div class="t" style="left:339.3px;top:987.3px;font-size:15px;line-height:18px;color:#111;transform:scale(0.875,1.12);transform-origin:0 14px;">37816 items</div>
<div class="b" style="left:333.5px;top:1014.6px;width:731.5px;height:9.4px;background:#f0f0f0;"></div>
<div class="b" style="left:333.5px;top:1019.4px;width:285.4px;height:1.3px;background:#222;"></div>
<div class="b" style="left:616.8px;top:1014.6px;width:2.1px;height:6.1px;background:#222;"></div>
<div class="b" style="left:333.5px;top:1020.6px;width:1.5px;height:3.4px;background:#222;"></div>
<div class="b" style="left:335px;top:1022.8px;width:730px;height:1.2px;background:#3a3a3a;"></div>
<div class="b" style="left:1062.6px;top:1014.6px;width:2.1px;height:9.4px;background:#111;"></div>
<svg class="b" style="left:0;top:0" width="1079" height="1024" viewBox="0 0 1079 1024"><path d="M1 54 C1 50.08 16.6 40 61 40 C105.4 40 121 50.08 121 54 C121 57.92 105.4 68 61 68 C16.6 68 1 57.92 1 54 Z" fill="none" stroke="#f00" stroke-width="2.1"/><path d="M617.6 18.2 C617.6 14 632.94 3.2 676.6 3.2 C720.26 3.2 735.6 14 735.6 18.2 C735.6 22.4 720.26 33.2 676.6 33.2 C632.94 33.2 617.6 22.4 617.6 18.2 Z" fill="none" stroke="#f00" stroke-width="2.1"/><path d="M546.5 61.5 C546.5 57.24 563.01 46.3 610 46.3 C656.99 46.3 673.5 57.24 673.5 61.5 C673.5 65.76 656.99 76.7 610 76.7 C563.01 76.7 546.5 65.76 546.5 61.5 Z" fill="none" stroke="#f00" stroke-width="2.1"/><path d="M232 204.9 C232 195.38 255.27 170.9 321.5 170.9 C387.73 170.9 411 195.38 411 204.9 C411 214.42 387.73 238.9 321.5 238.9 C255.27 238.9 232 214.42 232 204.9 Z" fill="none" stroke="#f00" stroke-width="2.1"/><path d="M929.4 263.4 C929.4 260.04 947.08 251.4 997.4 251.4 C1047.72 251.4 1065.4 260.04 1065.4 263.4 C1065.4 266.76 1047.72 275.4 997.4 275.4 C947.08 275.4 929.4 266.76 929.4 263.4 Z" fill="none" stroke="#f00" stroke-width="2.1"/><path d="M321 611 C321 607.44 336.34 598.3 380 598.3 C423.66 598.3 439 607.44 439 611 C439 614.56 423.66 623.7 380 623.7 C336.34 623.7 321 614.56 321 611 Z" fill="none" stroke="#f00" stroke-width="2.1"/><path d="M327 701.6 C327 697.01 336.62 685.2 364 685.2 C391.38 685.2 401 697.01 401 701.6 C401 706.19 391.38 718 364 718 C336.62 718 327 706.19 327 701.6 Z" fill="none" stroke="#f00" stroke-width="2.1"/><path d="M737.6 728.2 C737.6 722.88 749.87 709.2 784.8 709.2 C819.73 709.2 832 722.88 832 728.2 C832 733.52 819.73 747.2 784.8 747.2 C749.87 747.2 737.6 733.52 737.6 728.2 Z" fill="none" stroke="#f00" stroke-width="2.1"/><path d="M0.5 1003.5 C0.5 998.82 11.03 986.8 41 986.8 C70.97 986.8 81.5 998.82 81.5 1003.5 C81.5 1008.18 70.97 1020.2 41 1020.2 C11.03 1020.2 0.5 1008.18 0.5 1003.5 Z" fill="none" stroke="#f00" stroke-width="2.1"/><path d="M0.5 1004.5 C0.5 999.82 11.68 987.8 43.5 987.8 C75.32 987.8 86.5 999.82 86.5 1004.5 C86.5 1009.18 75.32 1021.2 43.5 1021.2 C11.68 1021.2 0.5 1009.18 0.5 1004.5 Z" fill="none" stroke="#f00" stroke-width="2.1"/><path d="M320 995.7 C320 991.16 332.48 979.5 368 979.5 C403.52 979.5 416 991.16 416 995.7 C416 1000.24 403.52 1011.9 368 1011.9 C332.48 1011.9 320 1000.24 320 995.7 Z" fill="none" stroke="#f00" stroke-width="2.1"/><path d="M320 995.9 C320 991.25 333.26 979.3 371 979.3 C408.74 979.3 422 991.25 422 995.9 C422 1000.55 408.74 1012.5 371 1012.5 C333.26 1012.5 320 1000.55 320 995.9 Z" fill="none" stroke="#f00" stroke-width="2.1"/><path d="M930 263 L118 57.5" fill="none" stroke="#f00" stroke-width="2.0"/><path d="M116.8 57.4 L136.2 53.2 L131.6 71.1 Z" fill="none" stroke="#f00" stroke-width="2.0" stroke-linejoin="miter"/><path d="M669 68 L940 255" fill="none" stroke="#f00" stroke-width="2.0"/><path d="M940.5 255 L930.2 235.7 L918.4 252.8 Z" fill="none" stroke="#f00" stroke-width="2.0" stroke-linejoin="miter"/><path d="M81 68 L40 990" fill="none" stroke="#f00" stroke-width="2.0"/><path d="M39.9 988 L29.7 971.6 L49.6 971.6 Z" fill="none" stroke="#f00" stroke-width="2.0" stroke-linejoin="miter"/><path d="M400 705 L737 725" fill="none" stroke="#f00" stroke-width="2.0"/><path d="M737 725 L717.1 714.4 L717.1 732.4 Z" fill="none" stroke="#f00" stroke-width="2.0" stroke-linejoin="miter"/><path d="M745.8 738.9 L413.4 985.2" fill="none" stroke="#f00" stroke-width="2.0"/><path d="M413.4 985.2 L421.5 968.2 L433.4 984.5 Z" fill="none" stroke="#f00" stroke-width="2.0" stroke-linejoin="miter"/></svg>
</body></html>
